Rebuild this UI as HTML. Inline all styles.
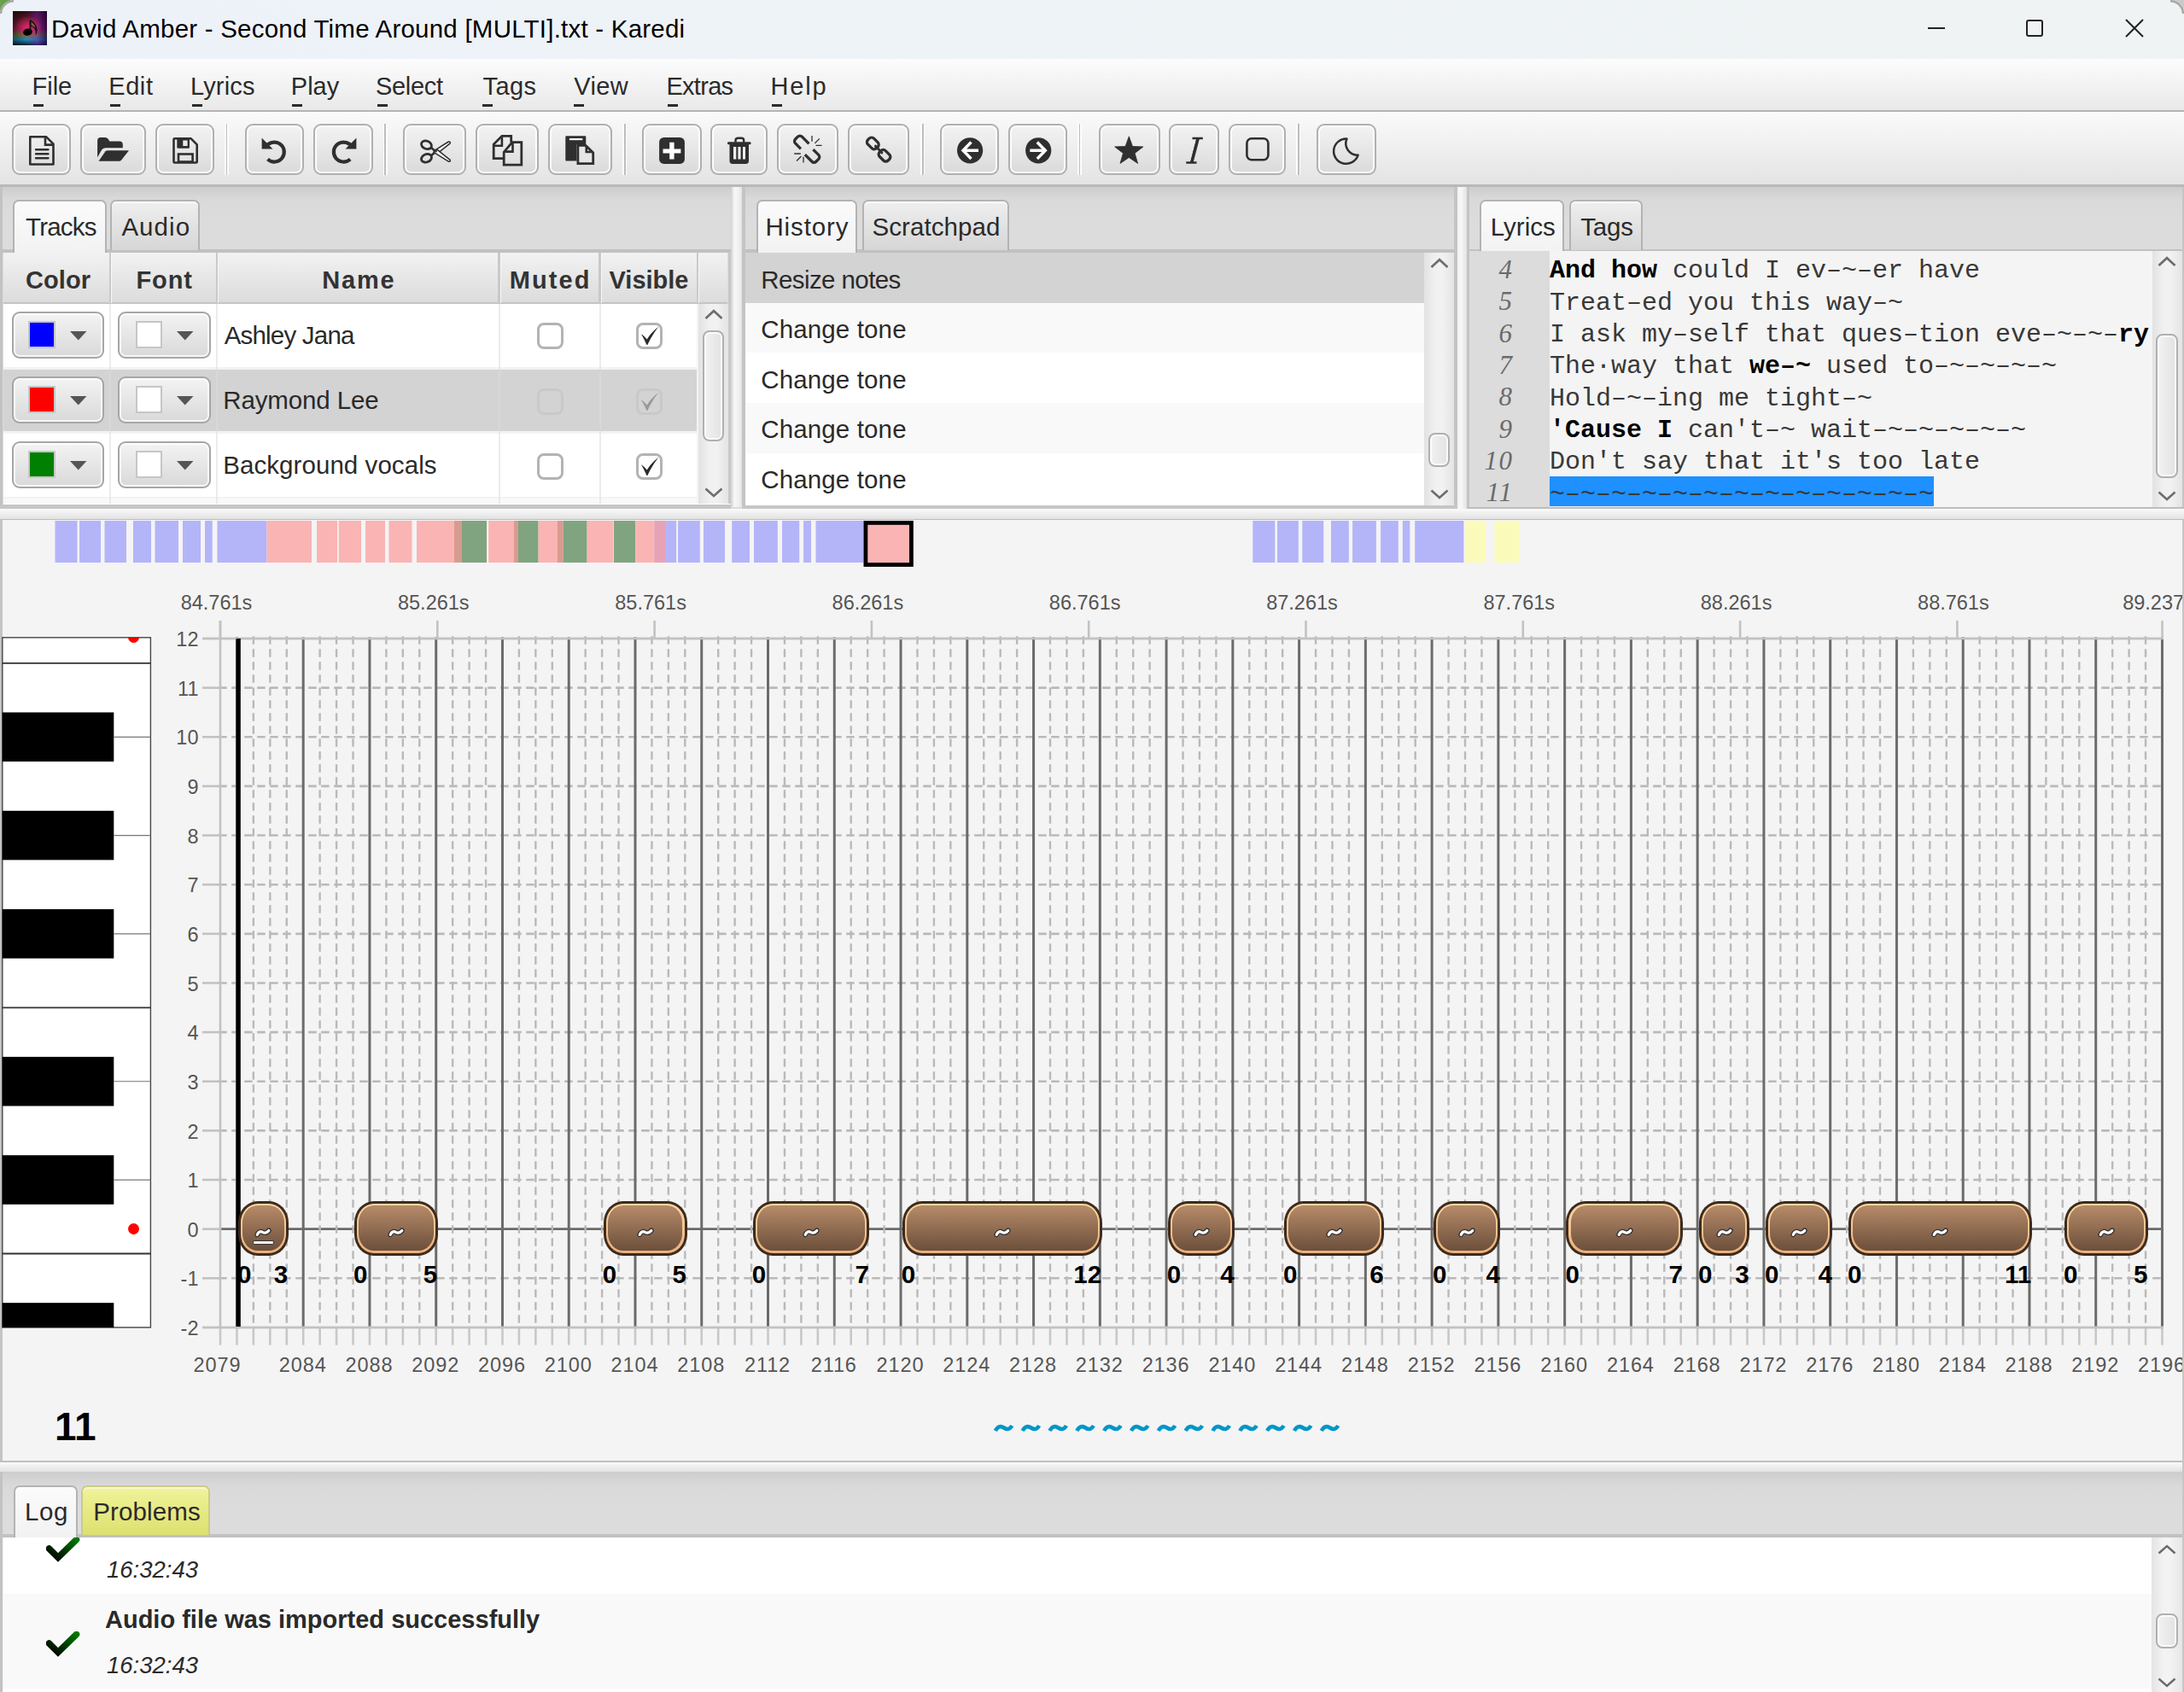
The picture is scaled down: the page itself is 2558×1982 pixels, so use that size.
<!DOCTYPE html>
<html><head><meta charset="utf-8"><style>
html,body{margin:0;padding:0;width:2558px;height:1982px;overflow:hidden;background:#f4f4f4;}
body>div,body>span,body>svg{position:absolute;box-sizing:border-box;}
.t{white-space:pre;}
</style></head><body>
<div style="left:0px;top:0px;width:2558px;height:69px;background:linear-gradient(90deg,#edf2f9 0%,#eef3f7 45%,#eff3f3 100%);"></div><div style="left:15px;top:13px;width:40px;height:40px;background:radial-gradient(ellipse 55% 45% at 45% 48%, rgba(235,40,110,0.85), rgba(235,40,110,0) 75%), linear-gradient(90deg, rgba(0,0,0,0.45) 0%, rgba(0,0,0,0) 40%, rgba(120,30,170,0.45) 72%, rgba(20,0,60,0.75) 100%), linear-gradient(to bottom, #2a1014 0%, #6a1a2c 28%, #982050 52%, #6a7a3a 70%, #1e8ab8 84%, #121c30 100%);"></div><svg style="left:15px;top:13px;width:40px;height:40px" viewBox="0 0 40 40"><ellipse cx="17.5" cy="24.6" rx="5.4" ry="4.1" fill="#000" transform="rotate(-12 17.5 24.6)"/><path d="M19.6 24 V10.5 L21.4 10.5 Q27.5 15 28.5 20.5 Q29.2 25 26.8 28.5 Q27.5 23.5 25.5 20.5 Q23.8 18.5 21.4 17.8 V24.5 Z" fill="#111"/><path d="M21.6 12.5 Q25.5 15.5 26.8 19.5 L24 18 Q22.5 16.8 21.6 16.5 Z" fill="#c08040" opacity="0.7"/></svg><span class="t" style="left:60px;top:19.43px;font-size:29.5px;line-height:29.5px;color:#000;font-weight:normal;font-style:normal;font-family:'Liberation Sans', sans-serif;letter-spacing:0.22px;">David Amber - Second Time Around [MULTI].txt - Karedi</span><div style="left:2258px;top:32px;width:20px;height:2px;background:#222;"></div><div style="left:2373px;top:23px;width:20px;height:20px;border:2px solid #222;border-radius:3px;"></div><svg style="left:2489px;top:22px;width:22px;height:22px" viewBox="0 0 22 22"><path d="M1 1 L21 21 M21 1 L1 21" stroke="#222" stroke-width="2"/></svg><div style="left:0px;top:69px;width:2558px;height:62px;background:linear-gradient(#fcfcfc,#e9e9e9);border-bottom:2px solid #b4b4b4;"></div><span class="t" style="left:37.5px;top:86.95px;font-size:29px;line-height:29px;color:#2b2b2b;font-weight:normal;font-style:normal;font-family:'Liberation Sans', sans-serif;letter-spacing:0px;">File</span><div style="left:39.1px;top:122px;width:12px;height:3px;background:#2b2b2b;"></div><span class="t" style="left:127.20000000000002px;top:86.95px;font-size:29px;line-height:29px;color:#2b2b2b;font-weight:normal;font-style:normal;font-family:'Liberation Sans', sans-serif;letter-spacing:0.6px;">Edit</span><div style="left:128.8px;top:122px;width:12px;height:3px;background:#2b2b2b;"></div><span class="t" style="left:223.0px;top:86.95px;font-size:29px;line-height:29px;color:#2b2b2b;font-weight:normal;font-style:normal;font-family:'Liberation Sans', sans-serif;letter-spacing:0.15px;">Lyrics</span><div style="left:224.6px;top:122px;width:12px;height:3px;background:#2b2b2b;"></div><span class="t" style="left:340.79999999999995px;top:86.95px;font-size:29px;line-height:29px;color:#2b2b2b;font-weight:normal;font-style:normal;font-family:'Liberation Sans', sans-serif;letter-spacing:0px;">Play</span><div style="left:342.4px;top:122px;width:12px;height:3px;background:#2b2b2b;"></div><span class="t" style="left:439.9px;top:86.95px;font-size:29px;line-height:29px;color:#2b2b2b;font-weight:normal;font-style:normal;font-family:'Liberation Sans', sans-serif;letter-spacing:-0.3px;">Select</span><div style="left:441.5px;top:122px;width:12px;height:3px;background:#2b2b2b;"></div><span class="t" style="left:565.6px;top:86.95px;font-size:29px;line-height:29px;color:#2b2b2b;font-weight:normal;font-style:normal;font-family:'Liberation Sans', sans-serif;letter-spacing:0.4px;">Tags</span><div style="left:565.2px;top:122px;width:12px;height:3px;background:#2b2b2b;"></div><span class="t" style="left:672.1999999999999px;top:86.95px;font-size:29px;line-height:29px;color:#2b2b2b;font-weight:normal;font-style:normal;font-family:'Liberation Sans', sans-serif;letter-spacing:0.4px;">View</span><div style="left:671.8px;top:122px;width:12px;height:3px;background:#2b2b2b;"></div><span class="t" style="left:780.4px;top:86.95px;font-size:29px;line-height:29px;color:#2b2b2b;font-weight:normal;font-style:normal;font-family:'Liberation Sans', sans-serif;letter-spacing:-0.7px;">Extras</span><div style="left:782px;top:122px;width:12px;height:3px;background:#2b2b2b;"></div><span class="t" style="left:902.6px;top:86.95px;font-size:29px;line-height:29px;color:#2b2b2b;font-weight:normal;font-style:normal;font-family:'Liberation Sans', sans-serif;letter-spacing:1.8px;">Help</span><div style="left:904.2px;top:122px;width:12px;height:3px;background:#2b2b2b;"></div><div style="left:0px;top:131px;width:2558px;height:88px;background:linear-gradient(#fafafa,#e4e4e4);border-bottom:3px solid #b8b8b8;"></div><div style="left:14px;top:145px;width:69px;height:60px;border:2px solid #b0b0b0;border-radius:9px;background:linear-gradient(#f3f3f3,#dadada);box-shadow:inset 0 0 0 2px rgba(255,255,255,0.85);"></div><div style="left:94px;top:145px;width:77px;height:60px;border:2px solid #b0b0b0;border-radius:9px;background:linear-gradient(#f3f3f3,#dadada);box-shadow:inset 0 0 0 2px rgba(255,255,255,0.85);"></div><div style="left:182px;top:145px;width:69px;height:60px;border:2px solid #b0b0b0;border-radius:9px;background:linear-gradient(#f3f3f3,#dadada);box-shadow:inset 0 0 0 2px rgba(255,255,255,0.85);"></div><div style="left:287px;top:145px;width:69px;height:60px;border:2px solid #b0b0b0;border-radius:9px;background:linear-gradient(#f3f3f3,#dadada);box-shadow:inset 0 0 0 2px rgba(255,255,255,0.85);"></div><div style="left:367px;top:145px;width:70px;height:60px;border:2px solid #b0b0b0;border-radius:9px;background:linear-gradient(#f3f3f3,#dadada);box-shadow:inset 0 0 0 2px rgba(255,255,255,0.85);"></div><div style="left:472px;top:145px;width:74px;height:60px;border:2px solid #b0b0b0;border-radius:9px;background:linear-gradient(#f3f3f3,#dadada);box-shadow:inset 0 0 0 2px rgba(255,255,255,0.85);"></div><div style="left:557px;top:145px;width:74px;height:60px;border:2px solid #b0b0b0;border-radius:9px;background:linear-gradient(#f3f3f3,#dadada);box-shadow:inset 0 0 0 2px rgba(255,255,255,0.85);"></div><div style="left:642px;top:145px;width:75px;height:60px;border:2px solid #b0b0b0;border-radius:9px;background:linear-gradient(#f3f3f3,#dadada);box-shadow:inset 0 0 0 2px rgba(255,255,255,0.85);"></div><div style="left:752px;top:145px;width:70px;height:60px;border:2px solid #b0b0b0;border-radius:9px;background:linear-gradient(#f3f3f3,#dadada);box-shadow:inset 0 0 0 2px rgba(255,255,255,0.85);"></div><div style="left:832px;top:145px;width:67px;height:60px;border:2px solid #b0b0b0;border-radius:9px;background:linear-gradient(#f3f3f3,#dadada);box-shadow:inset 0 0 0 2px rgba(255,255,255,0.85);"></div><div style="left:910px;top:145px;width:72px;height:60px;border:2px solid #b0b0b0;border-radius:9px;background:linear-gradient(#f3f3f3,#dadada);box-shadow:inset 0 0 0 2px rgba(255,255,255,0.85);"></div><div style="left:993px;top:145px;width:72px;height:60px;border:2px solid #b0b0b0;border-radius:9px;background:linear-gradient(#f3f3f3,#dadada);box-shadow:inset 0 0 0 2px rgba(255,255,255,0.85);"></div><div style="left:1101px;top:145px;width:69px;height:60px;border:2px solid #b0b0b0;border-radius:9px;background:linear-gradient(#f3f3f3,#dadada);box-shadow:inset 0 0 0 2px rgba(255,255,255,0.85);"></div><div style="left:1181px;top:145px;width:69px;height:60px;border:2px solid #b0b0b0;border-radius:9px;background:linear-gradient(#f3f3f3,#dadada);box-shadow:inset 0 0 0 2px rgba(255,255,255,0.85);"></div><div style="left:1287px;top:145px;width:72px;height:60px;border:2px solid #b0b0b0;border-radius:9px;background:linear-gradient(#f3f3f3,#dadada);box-shadow:inset 0 0 0 2px rgba(255,255,255,0.85);"></div><div style="left:1369px;top:145px;width:59px;height:60px;border:2px solid #b0b0b0;border-radius:9px;background:linear-gradient(#f3f3f3,#dadada);box-shadow:inset 0 0 0 2px rgba(255,255,255,0.85);"></div><div style="left:1439px;top:145px;width:67px;height:60px;border:2px solid #b0b0b0;border-radius:9px;background:linear-gradient(#f3f3f3,#dadada);box-shadow:inset 0 0 0 2px rgba(255,255,255,0.85);"></div><div style="left:1542px;top:145px;width:70px;height:60px;border:2px solid #b0b0b0;border-radius:9px;background:linear-gradient(#f3f3f3,#dadada);box-shadow:inset 0 0 0 2px rgba(255,255,255,0.85);"></div><div style="left:263px;top:145px;width:5px;height:60px;background:linear-gradient(90deg,#fdfdfd 30%,#bdbdbd 30%,#bdbdbd 70%,#fdfdfd 70%);"></div><div style="left:449px;top:145px;width:5px;height:60px;background:linear-gradient(90deg,#fdfdfd 30%,#bdbdbd 30%,#bdbdbd 70%,#fdfdfd 70%);"></div><div style="left:729px;top:145px;width:5px;height:60px;background:linear-gradient(90deg,#fdfdfd 30%,#bdbdbd 30%,#bdbdbd 70%,#fdfdfd 70%);"></div><div style="left:1078px;top:145px;width:5px;height:60px;background:linear-gradient(90deg,#fdfdfd 30%,#bdbdbd 30%,#bdbdbd 70%,#fdfdfd 70%);"></div><div style="left:1262px;top:145px;width:5px;height:60px;background:linear-gradient(90deg,#fdfdfd 30%,#bdbdbd 30%,#bdbdbd 70%,#fdfdfd 70%);"></div><div style="left:1518px;top:145px;width:5px;height:60px;background:linear-gradient(90deg,#fdfdfd 30%,#bdbdbd 30%,#bdbdbd 70%,#fdfdfd 70%);"></div><svg style="left:0;top:0;width:1700px;height:217px" viewBox="0 0 1700 217"><path d="M35.3 160.3 H54.2 L62.5 168.6 V192.5 H35.3 Z" fill="none" stroke="#2f2f2f" stroke-width="2.6" stroke-linejoin="round"/><path d="M53 160.3 V169.6 H62.5" fill="none" stroke="#2f2f2f" stroke-width="2.6"/><path d="M42 175.2 H56.5 M42 180.2 H56.5 M42 185.2 H56.5" stroke="#2f2f2f" stroke-width="2.4" stroke-linecap="round"/><path d="M114.1 184.5 V165 Q114.1 161 118 161 H123 Q126.5 161 128.2 165.6 H140 Q143.8 165.6 143.8 169.5 V173.2 H124 Q120.5 173.2 118.5 176.5 Z" fill="#2f2f2f"/><path d="M115.5 188.8 L123.5 177.2 Q124.5 176.2 126.5 176.2 H151 L142 187.8 Q141 188.8 139.5 188.8 Z" fill="#2f2f2f"/><path d="M203.5 163.5 Q203.5 162.3 204.7 162.3 H223.7 L230.7 169.3 V189.3 Q230.7 190.5 229.5 190.5 H204.7 Q203.5 190.5 203.5 189.3 Z" fill="none" stroke="#2f2f2f" stroke-width="2.6" stroke-linejoin="round"/><path d="M207.3 163 H222 V172.5 Q222 173.7 220.8 173.7 H208.5 Q207.3 173.7 207.3 172.5 Z M214.3 164.5 V171 H219.6 V164.5 Z" fill="#2f2f2f" fill-rule="evenodd"/><rect x="209" y="180.5" width="16.6" height="9" fill="none" stroke="#2f2f2f" stroke-width="2.6"/><path d="M311 173 A 11.5 11.5 0 1 1 313.5 186.5" fill="none" stroke="#2f2f2f" stroke-width="4.2"/><path d="M306.6 161.5 V174.5 H319.5 Z" fill="#2f2f2f"/><path d="M412.7 173 A 11.5 11.5 0 1 0 410.2 186.5" fill="none" stroke="#2f2f2f" stroke-width="4.2"/><path d="M417.4 161.5 V174.5 H404.5 Z" fill="#2f2f2f"/><ellipse cx="499.5" cy="169.8" rx="6.2" ry="4.6" fill="none" stroke="#2f2f2f" stroke-width="2.8" transform="rotate(22 499.5 169.8)"/><ellipse cx="499.5" cy="185.3" rx="6.2" ry="4.6" fill="none" stroke="#2f2f2f" stroke-width="2.8" transform="rotate(-22 499.5 185.3)"/><path d="M505 173 L510.6 177.6 L505 182.3" fill="none" stroke="#2f2f2f" stroke-width="2.6"/><path d="M508 176.8 L525.3 166 Q527.8 165.6 527.2 167.8 L512.2 179.8 Z" fill="#fafafa" stroke="#2f2f2f" stroke-width="1.5" stroke-linejoin="round"/><path d="M508 178.4 L525.3 189.2 Q527.8 189.6 527.2 187.4 L512.2 175.4 Z" fill="#fafafa" stroke="#2f2f2f" stroke-width="1.5" stroke-linejoin="round"/><circle cx="510.8" cy="177.6" r="1" fill="#2f2f2f"/><path d="M598.7 166.7 V159.3 H587.9 L578.2 169 V185.6 H590.2" fill="none" stroke="#2f2f2f" stroke-width="2.8" stroke-linejoin="miter"/><path d="M587.9 160.5 V170.8 H579" fill="none" stroke="#2f2f2f" stroke-width="2.6"/><path d="M599.9 166.7 H610.8 V193.1 H590.2 V178.2 Z" fill="none" stroke="#2f2f2f" stroke-width="2.8" stroke-linejoin="miter"/><path d="M600.5 167.8 V177.6 H591.2" fill="none" stroke="#2f2f2f" stroke-width="2.6"/><path d="M662.3 160.3 Q662.3 159.3 663.3 159.3 H685.3 Q686.3 159.3 686.3 160.3 V169 H675.5 V188.5 H663.3 Q662.3 188.5 662.3 187.5 Z" fill="#2f2f2f"/><rect x="666.9" y="162" width="15.4" height="2.2" fill="#f4f4f4"/><path d="M676.9 170.4 H686 L694.7 178.8 V191.7 H676.9 Z" fill="#e6e6e6" stroke="#2f2f2f" stroke-width="2.8" stroke-linejoin="miter"/><path d="M686.8 171 V178 H694" fill="none" stroke="#2f2f2f" stroke-width="2.6"/><rect x="772.1" y="161" width="29.8" height="30.9" rx="5.5" fill="#2f2f2f"/><path d="M776.5 174.5 H797.4 V179.5 H776.5 Z M784.2 166.8 H789.6 V186.4 H784.2 Z" fill="#fff"/><path d="M861.5 166.8 V164.5 Q861.5 161.8 864.5 161.8 H868.5 Q871.2 161.8 871.2 164.5 V166.8" fill="none" stroke="#2f2f2f" stroke-width="2.4"/><rect x="852" y="166.2" width="27.5" height="3" rx="1.2" fill="#2f2f2f"/><path d="M854.5 169 H877 V188.5 Q877 191.9 873.5 191.9 H858 Q854.5 191.9 854.5 188.5 Z" fill="#2f2f2f"/><path d="M859 172 H862.3 V186.4 H859 Z M864.4 172 H867.6 V186.4 H864.4 Z M870 172 H873 V186.4 H870 Z" fill="#efefef"/><path d="M6.5 -5.5 H-5 A3.5 3.5 0 0 0 -8.5 -2 V2 A3.5 3.5 0 0 0 -5 5.5 H4" fill="none" stroke="#2f2f2f" stroke-width="3.3" stroke-linecap="butt" transform="translate(939 167.6) rotate(45)"/><path d="M-6.5 5.5 H5 A3.5 3.5 0 0 0 8.5 2 V-2 A3.5 3.5 0 0 0 5 -5.5 H-4" fill="none" stroke="#2f2f2f" stroke-width="3.3" stroke-linecap="butt" transform="translate(951.3 181.8) rotate(45)"/><path d="M951 159 V165.8 M954.3 167.9 L959.8 162.4 M955.6 170.3 H962.5 M930.2 180 H937.8 M933 188.5 L938.5 183 M941 183.7 V190.5" stroke="#2f2f2f" stroke-width="1.3"/><rect x="1017.4" y="160.9" width="9.8" height="14" rx="3.8" fill="none" stroke="#2f2f2f" stroke-width="3.3" transform="rotate(-45 1022.3 167.9)"/><rect x="1031.1" y="175.3" width="9.8" height="14" rx="3.8" fill="none" stroke="#2f2f2f" stroke-width="3.3" transform="rotate(-45 1036 182.3)"/><path d="M1025.5 171.2 L1032.8 178.8" stroke="#2f2f2f" stroke-width="3" stroke-linecap="round"/><circle cx="1136.1" cy="176.3" r="15.1" fill="#2f2f2f"/><path d="M1137.5 166.5 L1128 176.3 L1137.5 186 M1128.8 176.3 H1146" fill="none" stroke="#fff" stroke-width="3.4" stroke-linejoin="miter"/><circle cx="1216.2" cy="176.3" r="15.1" fill="#2f2f2f"/><path d="M1214.8 166.5 L1224.3 176.3 L1214.8 186 M1223.5 176.3 H1206.3" fill="none" stroke="#fff" stroke-width="3.4" stroke-linejoin="miter"/><polygon points="1322.30,159.80 1326.53,171.48 1338.94,171.89 1329.15,179.52 1332.59,191.46 1322.30,184.50 1312.01,191.46 1315.45,179.52 1305.66,171.89 1318.07,171.48" fill="#2f2f2f" stroke="#2f2f2f" stroke-width="0.8" stroke-linejoin="round"/><path d="M1396.5 162 H1408.8 M1389.3 190.5 H1401.5 M1402.6 162 L1395.4 190.5" fill="none" stroke="#2f2f2f" stroke-width="2.6"/><path d="M1401.5 162.2 L1405 162.2 L1397.6 190.3 L1394 190.3 Z" fill="#2f2f2f"/><rect x="1460.4" y="162.3" width="25" height="25" rx="5.5" fill="none" stroke="#2f2f2f" stroke-width="2.6"/><path d="M1577.5 162.6 A 14.6 14.6 0 1 0 1590.6 181.6 A 13.5 13.5 0 0 1 1577.5 162.6 Z" fill="none" stroke="#2f2f2f" stroke-width="2.5" stroke-linejoin="round"/></svg><div style="left:0px;top:219px;width:2558px;height:378px;background:#dcdcdc;"></div><div style="left:0px;top:219px;width:3px;height:378px;background:#c2c2c2;"></div><div style="left:3px;top:219px;width:853px;height:77px;background:linear-gradient(#cdcdcd 0px,#d9d9d9 14px,#dcdcdc 38px);"></div><div style="left:3px;top:292px;width:853px;height:4px;background:#c1c1c1;"></div><div style="left:129px;top:234px;width:105px;height:59px;background:linear-gradient(#efefef,#d6d6d6);border:2px solid #b3b3b3;border-bottom:none;border-radius:7px 7px 0 0;box-shadow:inset 0 2px 0 rgba(255,255,255,0.7);"></div><span class="t" style="left:142.4px;top:251.03px;font-size:29.5px;line-height:29.5px;color:#2a2a2a;font-weight:normal;font-style:normal;font-family:'Liberation Sans', sans-serif;letter-spacing:1.05px;">Audio</span><div style="left:15px;top:234px;width:110px;height:62px;background:linear-gradient(#fbfbfb,#f2f2f2);border:2px solid #b3b3b3;border-bottom:none;border-radius:7px 7px 0 0;box-shadow:inset 0 2px 0 rgba(255,255,255,0.7);"></div><span class="t" style="left:30px;top:251.03px;font-size:29.5px;line-height:29.5px;color:#2a2a2a;font-weight:normal;font-style:normal;font-family:'Liberation Sans', sans-serif;letter-spacing:-0.78px;">Tracks</span><div style="left:4px;top:296px;width:848px;height:60px;background:linear-gradient(#f2f2f2,#dcdcdc);border-bottom:2px solid #c4c4c4;"></div><div style="left:127.5px;top:296px;width:2.5px;height:59px;background:#c9c9c9;box-shadow:1px 0 0 #f7f7f7;"></div><div style="left:252.5px;top:296px;width:2.5px;height:59px;background:#c9c9c9;box-shadow:1px 0 0 #f7f7f7;"></div><div style="left:583px;top:296px;width:2.5px;height:59px;background:#c9c9c9;box-shadow:1px 0 0 #f7f7f7;"></div><div style="left:701px;top:296px;width:2.5px;height:59px;background:#c9c9c9;box-shadow:1px 0 0 #f7f7f7;"></div><div style="left:815.5px;top:296px;width:2.5px;height:59px;background:#c9c9c9;box-shadow:1px 0 0 #f7f7f7;"></div><span class="t" style="left:-431.9px;width:1000px;text-align:center;top:314.45px;font-size:29px;line-height:29px;color:#333;font-weight:bold;font-style:normal;font-family:'Liberation Sans', sans-serif;letter-spacing:0.1px;">Color</span><span class="t" style="left:-307.3px;width:1000px;text-align:center;top:314.45px;font-size:29px;line-height:29px;color:#333;font-weight:bold;font-style:normal;font-family:'Liberation Sans', sans-serif;letter-spacing:0.9px;">Font</span><span class="t" style="left:-79.60000000000002px;width:1000px;text-align:center;top:314.45px;font-size:29px;line-height:29px;color:#333;font-weight:bold;font-style:normal;font-family:'Liberation Sans', sans-serif;letter-spacing:1.8px;">Name</span><span class="t" style="left:144.70000000000005px;width:1000px;text-align:center;top:314.45px;font-size:29px;line-height:29px;color:#333;font-weight:bold;font-style:normal;font-family:'Liberation Sans', sans-serif;letter-spacing:2.1px;">Muted</span><span class="t" style="left:260px;width:1000px;text-align:center;top:314.45px;font-size:29px;line-height:29px;color:#333;font-weight:bold;font-style:normal;font-family:'Liberation Sans', sans-serif;letter-spacing:0px;">Visible</span><div style="left:4px;top:356px;width:812px;height:234px;background:#f3f3f3;"></div><div style="left:4px;top:356px;width:812px;height:74px;background:#ffffff;"></div><div style="left:4px;top:433px;width:812px;height:72px;background:#d3d3d3;"></div><div style="left:4px;top:508px;width:812px;height:74px;background:#ffffff;"></div><div style="left:4px;top:584px;width:812px;height:6px;background:#f9f9f9;"></div><div style="left:128px;top:356px;width:2px;height:234px;background:rgba(220,220,220,0.55);"></div><div style="left:253px;top:356px;width:2px;height:234px;background:rgba(220,220,220,0.55);"></div><div style="left:583.5px;top:356px;width:2px;height:234px;background:rgba(220,220,220,0.55);"></div><div style="left:701.5px;top:356px;width:2px;height:234px;background:rgba(220,220,220,0.55);"></div><div style="left:13.5px;top:365px;width:108px;height:54.5px;border:2px solid #a6a6a6;border-radius:9px;background:linear-gradient(#f3f3f3,#d9d9d9);box-shadow:inset 0 0 0 2px rgba(255,255,255,0.75);"></div><div style="left:33px;top:375.5px;width:32px;height:32px;border:2px solid #c6c6c6;background:#0000ff;"></div><svg style="left:82px;top:387.5px;width:20px;height:11px" viewBox="0 0 20 11"><path d="M0 0 H19.5 L9.75 10.5 Z" fill="#555"/></svg><div style="left:138px;top:365px;width:108.5px;height:54.5px;border:2px solid #a6a6a6;border-radius:9px;background:linear-gradient(#f3f3f3,#d9d9d9);box-shadow:inset 0 0 0 2px rgba(255,255,255,0.75);"></div><div style="left:158.5px;top:375.5px;width:31px;height:32px;border:2px solid #c6c6c6;background:#fff;"></div><svg style="left:207px;top:387.5px;width:20px;height:11px" viewBox="0 0 20 11"><path d="M0 0 H19.5 L9.75 10.5 Z" fill="#555"/></svg><span class="t" style="left:262.7px;top:378.23px;font-size:29.5px;line-height:29.5px;color:#2a2a2a;font-weight:normal;font-style:normal;font-family:'Liberation Sans', sans-serif;letter-spacing:-0.8px;">Ashley Jana</span><div style="left:13.5px;top:441.4px;width:108px;height:54.5px;border:2px solid #a6a6a6;border-radius:9px;background:linear-gradient(#f3f3f3,#d9d9d9);box-shadow:inset 0 0 0 2px rgba(255,255,255,0.75);"></div><div style="left:33px;top:451.9px;width:32px;height:32px;border:2px solid #c6c6c6;background:#ff0000;"></div><svg style="left:82px;top:463.9px;width:20px;height:11px" viewBox="0 0 20 11"><path d="M0 0 H19.5 L9.75 10.5 Z" fill="#555"/></svg><div style="left:138px;top:441.4px;width:108.5px;height:54.5px;border:2px solid #a6a6a6;border-radius:9px;background:linear-gradient(#f3f3f3,#d9d9d9);box-shadow:inset 0 0 0 2px rgba(255,255,255,0.75);"></div><div style="left:158.5px;top:451.9px;width:31px;height:32px;border:2px solid #c6c6c6;background:#fff;"></div><svg style="left:207px;top:463.9px;width:20px;height:11px" viewBox="0 0 20 11"><path d="M0 0 H19.5 L9.75 10.5 Z" fill="#555"/></svg><span class="t" style="left:261.3px;top:454.03px;font-size:29.5px;line-height:29.5px;color:#2a2a2a;font-weight:normal;font-style:normal;font-family:'Liberation Sans', sans-serif;letter-spacing:-0.13px;">Raymond Lee</span><div style="left:13.5px;top:517px;width:108px;height:54.5px;border:2px solid #a6a6a6;border-radius:9px;background:linear-gradient(#f3f3f3,#d9d9d9);box-shadow:inset 0 0 0 2px rgba(255,255,255,0.75);"></div><div style="left:33px;top:527.5px;width:32px;height:32px;border:2px solid #c6c6c6;background:#008000;"></div><svg style="left:82px;top:539.5px;width:20px;height:11px" viewBox="0 0 20 11"><path d="M0 0 H19.5 L9.75 10.5 Z" fill="#555"/></svg><div style="left:138px;top:517px;width:108.5px;height:54.5px;border:2px solid #a6a6a6;border-radius:9px;background:linear-gradient(#f3f3f3,#d9d9d9);box-shadow:inset 0 0 0 2px rgba(255,255,255,0.75);"></div><div style="left:158.5px;top:527.5px;width:31px;height:32px;border:2px solid #c6c6c6;background:#fff;"></div><svg style="left:207px;top:539.5px;width:20px;height:11px" viewBox="0 0 20 11"><path d="M0 0 H19.5 L9.75 10.5 Z" fill="#555"/></svg><span class="t" style="left:261.3px;top:529.63px;font-size:29.5px;line-height:29.5px;color:#2a2a2a;font-weight:normal;font-style:normal;font-family:'Liberation Sans', sans-serif;letter-spacing:0.06px;">Background vocals</span><div style="left:628.6px;top:378px;width:31.3px;height:31.3px;border:3px solid #b3b3b3;border-radius:8px;background:#ffffff;"></div><div style="left:744.6px;top:378px;width:31.3px;height:31.3px;border:3px solid #b3b3b3;border-radius:8px;background:#ffffff;"></div><svg style="left:744.6px;top:378px;width:31px;height:31px" viewBox="0 0 31 31"><path d="M6 13.3 Q8.6 14.6 12.7 19.6 Q17.5 11.5 26.3 4.8 Q18.8 14 13.6 25.6 Q12.9 26.6 12.2 25.6 Q9.3 18.8 6 13.3 Z" fill="#2a2a2a"/></svg><div style="left:628.6px;top:454.5px;width:31.3px;height:31.3px;border:3px solid #c9c9c9;border-radius:8px;background:transparent;"></div><div style="left:744.6px;top:454.5px;width:31.3px;height:31.3px;border:3px solid #c9c9c9;border-radius:8px;background:transparent;"></div><svg style="left:744.6px;top:454.5px;width:31px;height:31px" viewBox="0 0 31 31"><path d="M6 13.3 Q8.6 14.6 12.7 19.6 Q17.5 11.5 26.3 4.8 Q18.8 14 13.6 25.6 Q12.9 26.6 12.2 25.6 Q9.3 18.8 6 13.3 Z" fill="#9a9a9a"/></svg><div style="left:628.6px;top:530.5px;width:31.3px;height:31.3px;border:3px solid #b3b3b3;border-radius:8px;background:#ffffff;"></div><div style="left:744.6px;top:530.5px;width:31.3px;height:31.3px;border:3px solid #b3b3b3;border-radius:8px;background:#ffffff;"></div><svg style="left:744.6px;top:530.5px;width:31px;height:31px" viewBox="0 0 31 31"><path d="M6 13.3 Q8.6 14.6 12.7 19.6 Q17.5 11.5 26.3 4.8 Q18.8 14 13.6 25.6 Q12.9 26.6 12.2 25.6 Q9.3 18.8 6 13.3 Z" fill="#2a2a2a"/></svg><div style="left:816px;top:356px;width:2px;height:234px;background:#f4f4f4;"></div><div style="left:818px;top:356px;width:35px;height:234px;background:linear-gradient(90deg,#e2e2e2,#f0f0f0 35%,#f2f2f2 60%,#e4e4e4);"></div><svg style="left:824.5px;top:361px;width:22px;height:14px" viewBox="0 0 22 14"><path d="M1.5 12 L11 3.2 L20.5 12" fill="none" stroke="#6e6e6e" stroke-width="2.7"/></svg><svg style="left:824.5px;top:570px;width:22px;height:14px" viewBox="0 0 22 14"><path d="M1.5 2.5 L11 11 L20.5 2.5" fill="none" stroke="#6e6e6e" stroke-width="2.7"/></svg><div style="left:822.8px;top:387px;width:25.6px;height:130px;border:2px solid #b0b0b0;border-radius:8px;background:linear-gradient(90deg,#f2f2f2,#e2e2e2);box-shadow:inset 0 0 0 2px rgba(255,255,255,0.8);"></div><div style="left:853px;top:296px;width:3px;height:298px;background:#c8c8c8;"></div><div style="left:4px;top:589.5px;width:852px;height:1.5px;background:#ffffff;"></div><div style="left:0px;top:591px;width:856px;height:5px;background:#c6c6c6;"></div><div style="left:856px;top:219px;width:16px;height:375px;background:linear-gradient(90deg,#cfcfcf,#f7f7f7 25%,#f0f0f0 60%,#d6d6d6);"></div><div style="left:869px;top:219px;width:4px;height:378px;background:#c4c4c4;"></div><div style="left:873px;top:219px;width:830px;height:77px;background:linear-gradient(#cdcdcd 0px,#d9d9d9 14px,#dcdcdc 38px);"></div><div style="left:873px;top:292px;width:830px;height:4px;background:#c1c1c1;"></div><div style="left:1009.6px;top:234px;width:172.39999999999998px;height:59px;background:linear-gradient(#efefef,#d6d6d6);border:2px solid #b3b3b3;border-bottom:none;border-radius:7px 7px 0 0;box-shadow:inset 0 2px 0 rgba(255,255,255,0.7);"></div><span class="t" style="left:1021.4px;top:251.03px;font-size:29.5px;line-height:29.5px;color:#2a2a2a;font-weight:normal;font-style:normal;font-family:'Liberation Sans', sans-serif;letter-spacing:0.09px;">Scratchpad</span><div style="left:885.6px;top:234px;width:118.10000000000002px;height:62px;background:linear-gradient(#fbfbfb,#f2f2f2);border:2px solid #b3b3b3;border-bottom:none;border-radius:7px 7px 0 0;box-shadow:inset 0 2px 0 rgba(255,255,255,0.7);"></div><span class="t" style="left:896.4px;top:251.03px;font-size:29.5px;line-height:29.5px;color:#2a2a2a;font-weight:normal;font-style:normal;font-family:'Liberation Sans', sans-serif;letter-spacing:0.88px;">History</span><div style="left:873px;top:296px;width:795px;height:295.6px;background:#ffffff;"></div><div style="left:873px;top:296px;width:795px;height:58.60000000000002px;background:#d3d3d3;"></div><div style="left:873px;top:354.6px;width:795px;height:58.89999999999998px;background:#f9f9f9;"></div><div style="left:873px;top:413.5px;width:795px;height:58.5px;background:#ffffff;"></div><div style="left:873px;top:472px;width:795px;height:59px;background:#f9f9f9;"></div><div style="left:873px;top:531px;width:795px;height:60.60000000000002px;background:#ffffff;"></div><span class="t" style="left:891.2px;top:312.78px;font-size:29.5px;line-height:29.5px;color:#2a2a2a;font-weight:normal;font-style:normal;font-family:'Liberation Sans', sans-serif;letter-spacing:-0.58px;">Resize notes</span><span class="t" style="left:891.2px;top:371.28px;font-size:29.5px;line-height:29.5px;color:#2a2a2a;font-weight:normal;font-style:normal;font-family:'Liberation Sans', sans-serif;letter-spacing:0.14px;">Change tone</span><span class="t" style="left:891.2px;top:429.78px;font-size:29.5px;line-height:29.5px;color:#2a2a2a;font-weight:normal;font-style:normal;font-family:'Liberation Sans', sans-serif;letter-spacing:0.14px;">Change tone</span><span class="t" style="left:891.2px;top:488.28px;font-size:29.5px;line-height:29.5px;color:#2a2a2a;font-weight:normal;font-style:normal;font-family:'Liberation Sans', sans-serif;letter-spacing:0.14px;">Change tone</span><span class="t" style="left:891.2px;top:546.78px;font-size:29.5px;line-height:29.5px;color:#2a2a2a;font-weight:normal;font-style:normal;font-family:'Liberation Sans', sans-serif;letter-spacing:0.14px;">Change tone</span><div style="left:1668px;top:296px;width:35px;height:295.6px;background:linear-gradient(90deg,#e2e2e2,#f0f0f0 35%,#f2f2f2 60%,#e4e4e4);"></div><svg style="left:1674.5px;top:301px;width:22px;height:14px" viewBox="0 0 22 14"><path d="M1.5 12 L11 3.2 L20.5 12" fill="none" stroke="#6e6e6e" stroke-width="2.7"/></svg><svg style="left:1674.5px;top:571.6px;width:22px;height:14px" viewBox="0 0 22 14"><path d="M1.5 2.5 L11 11 L20.5 2.5" fill="none" stroke="#6e6e6e" stroke-width="2.7"/></svg><div style="left:1672.8px;top:507px;width:25.6px;height:40px;border:2px solid #b0b0b0;border-radius:8px;background:linear-gradient(90deg,#f2f2f2,#e2e2e2);box-shadow:inset 0 0 0 2px rgba(255,255,255,0.8);"></div><div style="left:1703px;top:219px;width:4px;height:378px;background:#c4c4c4;"></div><div style="left:869px;top:591.6px;width:838px;height:4.4px;background:#c6c6c6;"></div><div style="left:1707px;top:219px;width:11px;height:378px;background:linear-gradient(90deg,#f2f2f2,#f7f7f7 40%,#e2e2e2);"></div><div style="left:1718px;top:219px;width:3px;height:378px;background:#c4c4c4;"></div><div style="left:1721px;top:219px;width:837px;height:77px;background:linear-gradient(#cdcdcd 0px,#d9d9d9 14px,#dcdcdc 38px);"></div><div style="left:1721px;top:292px;width:837px;height:4px;background:#c1c1c1;"></div><div style="left:1837.9px;top:234px;width:86.59999999999991px;height:59px;background:linear-gradient(#efefef,#d6d6d6);border:2px solid #b3b3b3;border-bottom:none;border-radius:7px 7px 0 0;box-shadow:inset 0 2px 0 rgba(255,255,255,0.7);"></div><span class="t" style="left:1851.2px;top:251.03px;font-size:29.5px;line-height:29.5px;color:#2a2a2a;font-weight:normal;font-style:normal;font-family:'Liberation Sans', sans-serif;letter-spacing:-0.13px;">Tags</span><div style="left:1733px;top:234px;width:99px;height:62px;background:linear-gradient(#fbfbfb,#f2f2f2);border:2px solid #b3b3b3;border-bottom:none;border-radius:7px 7px 0 0;box-shadow:inset 0 2px 0 rgba(255,255,255,0.7);"></div><span class="t" style="left:1745.8px;top:251.03px;font-size:29.5px;line-height:29.5px;color:#2a2a2a;font-weight:normal;font-style:normal;font-family:'Liberation Sans', sans-serif;letter-spacing:0px;">Lyrics</span><div style="left:1721px;top:294px;width:93.5px;height:299.5px;background:#dcdcdc;"></div><div style="left:1814.5px;top:294px;width:706px;height:299.5px;background:#f4f4f4;"></div><div style="left:1815px;top:557.8px;width:450px;height:35.7px;background:#1e90ff;"></div><div style="left:1721px;top:294px;width:800px;height:299.5px;overflow:hidden;"><span class="t" style="position:absolute;right:748.5px;top:5.84px;font-size:31px;line-height:31px;color:#6a6a6a;font-style:italic;letter-spacing:1.5px;font-family:'Liberation Serif', serif">4</span><span class="t" style="position:absolute;left:94px;top:8.31px;font-size:30px;line-height:30px;color:#383838;font-family:'Liberation Mono', monospace"><b style="color:#000">And how</b> could I ev–~–er have</span><span class="t" style="position:absolute;right:748.5px;top:43.19px;font-size:31px;line-height:31px;color:#6a6a6a;font-style:italic;letter-spacing:1.5px;font-family:'Liberation Serif', serif">5</span><span class="t" style="position:absolute;left:94px;top:45.66px;font-size:30px;line-height:30px;color:#383838;font-family:'Liberation Mono', monospace">Treat–ed you this way–~</span><span class="t" style="position:absolute;right:748.5px;top:80.54px;font-size:31px;line-height:31px;color:#6a6a6a;font-style:italic;letter-spacing:1.5px;font-family:'Liberation Serif', serif">6</span><span class="t" style="position:absolute;left:94px;top:83.00px;font-size:30px;line-height:30px;color:#383838;font-family:'Liberation Mono', monospace">I ask my–self that ques–tion eve–~–~–<b style="color:#000">ry</b></span><span class="t" style="position:absolute;right:748.5px;top:117.89px;font-size:31px;line-height:31px;color:#6a6a6a;font-style:italic;letter-spacing:1.5px;font-family:'Liberation Serif', serif">7</span><span class="t" style="position:absolute;left:94px;top:120.36px;font-size:30px;line-height:30px;color:#383838;font-family:'Liberation Mono', monospace">The·way that <b style="color:#000">we–~</b> used to–~–~–~–~</span><span class="t" style="position:absolute;right:748.5px;top:155.24px;font-size:31px;line-height:31px;color:#6a6a6a;font-style:italic;letter-spacing:1.5px;font-family:'Liberation Serif', serif">8</span><span class="t" style="position:absolute;left:94px;top:157.71px;font-size:30px;line-height:30px;color:#383838;font-family:'Liberation Mono', monospace">Hold–~–ing me tight–~</span><span class="t" style="position:absolute;right:748.5px;top:192.59px;font-size:31px;line-height:31px;color:#6a6a6a;font-style:italic;letter-spacing:1.5px;font-family:'Liberation Serif', serif">9</span><span class="t" style="position:absolute;left:94px;top:195.05px;font-size:30px;line-height:30px;color:#383838;font-family:'Liberation Mono', monospace"><b style="color:#000">'Cause I</b> can't–~ wait–~–~–~–~–~</span><span class="t" style="position:absolute;right:748.5px;top:229.94px;font-size:31px;line-height:31px;color:#6a6a6a;font-style:italic;letter-spacing:1.5px;font-family:'Liberation Serif', serif">10</span><span class="t" style="position:absolute;left:94px;top:232.41px;font-size:30px;line-height:30px;color:#383838;font-family:'Liberation Mono', monospace">Don't say that it's too late</span><span class="t" style="position:absolute;right:748.5px;top:267.29px;font-size:31px;line-height:31px;color:#6a6a6a;font-style:italic;letter-spacing:1.5px;font-family:'Liberation Serif', serif">11</span><span class="t" style="position:absolute;left:94px;top:269.75px;font-size:30px;line-height:30px;color:#383838;font-family:'Liberation Mono', monospace">~–~–~–~–~–~–~–~–~–~–~–~–~</span></div><div style="left:2520.5px;top:294px;width:35.5px;height:299.5px;background:linear-gradient(90deg,#e2e2e2,#f0f0f0 35%,#f2f2f2 60%,#e4e4e4);"></div><svg style="left:2527.25px;top:299px;width:22px;height:14px" viewBox="0 0 22 14"><path d="M1.5 12 L11 3.2 L20.5 12" fill="none" stroke="#6e6e6e" stroke-width="2.7"/></svg><svg style="left:2527.25px;top:573.5px;width:22px;height:14px" viewBox="0 0 22 14"><path d="M1.5 2.5 L11 11 L20.5 2.5" fill="none" stroke="#6e6e6e" stroke-width="2.7"/></svg><div style="left:2525.3px;top:391px;width:25.6px;height:169px;border:2px solid #b0b0b0;border-radius:8px;background:linear-gradient(90deg,#f2f2f2,#e2e2e2);box-shadow:inset 0 0 0 2px rgba(255,255,255,0.8);"></div><div style="left:2556px;top:219px;width:2px;height:378px;background:#c4c4c4;"></div><div style="left:1718px;top:593.5px;width:840px;height:3px;background:#bdbdbd;"></div><div style="left:0px;top:596px;width:2558px;height:13.5px;background:linear-gradient(#fafafa,#e2e2e2);border-bottom:2px solid #bdbdbd;"></div><div style="left:0px;top:609px;width:2558px;height:1104px;background:#f4f4f4;border-left:3px solid #c4c4c4;"></div><svg style="left:0;top:600px;width:2558px;height:1000px" viewBox="0 600 2558 1000"><rect x="64.5" y="610" width="26.00" height="49" fill="#b4b4f9"/><rect x="93" y="610" width="25.00" height="49" fill="#b4b4f9"/><rect x="122.5" y="610" width="25.50" height="49" fill="#b4b4f9"/><rect x="156" y="610" width="21.00" height="49" fill="#b4b4f9"/><rect x="181.5" y="610" width="27.50" height="49" fill="#b4b4f9"/><rect x="214" y="610" width="21.00" height="49" fill="#b4b4f9"/><rect x="240" y="610" width="8.75" height="49" fill="#b4b4f9"/><rect x="254.5" y="610" width="58.00" height="49" fill="#b4b4f9"/><rect x="312.5" y="610" width="52.50" height="49" fill="#fab4b4"/><rect x="371" y="610" width="24.00" height="49" fill="#fab4b4"/><rect x="396.75" y="610" width="26.25" height="49" fill="#fab4b4"/><rect x="428" y="610" width="23.00" height="49" fill="#fab4b4"/><rect x="455.5" y="610" width="27.00" height="49" fill="#fab4b4"/><rect x="488" y="610" width="44.00" height="49" fill="#fab4b4"/><rect x="532" y="610" width="8.30" height="49" fill="#d89b90"/><rect x="540.3" y="610" width="29.80" height="49" fill="#80a480"/><rect x="572.2" y="610" width="29.80" height="49" fill="#fab4b4"/><rect x="602" y="610" width="5.00" height="49" fill="#d89b90"/><rect x="607" y="610" width="23.60" height="49" fill="#80a480"/><rect x="630.6" y="610" width="22.40" height="49" fill="#fab4b4"/><rect x="653" y="610" width="6.80" height="49" fill="#d89b90"/><rect x="659.8" y="610" width="27.80" height="49" fill="#80a480"/><rect x="687.6" y="610" width="30.90" height="49" fill="#fab4b4"/><rect x="719" y="610" width="25.20" height="49" fill="#80a480"/><rect x="744.2" y="610" width="22.10" height="49" fill="#fab4b4"/><rect x="766.3" y="610" width="12.70" height="49" fill="#e6a2b6"/><rect x="779" y="610" width="13.10" height="49" fill="#b4b4f9"/><rect x="794.1" y="610" width="25.70" height="49" fill="#b4b4f9"/><rect x="824" y="610" width="25.00" height="49" fill="#b4b4f9"/><rect x="857.2" y="610" width="20.80" height="49" fill="#b4b4f9"/><rect x="883" y="610" width="27.80" height="49" fill="#b4b4f9"/><rect x="916" y="610" width="20.20" height="49" fill="#b4b4f9"/><rect x="941.1" y="610" width="8.90" height="49" fill="#b4b4f9"/><rect x="955.5" y="610" width="56.00" height="49" fill="#b4b4f9"/><rect x="1467.3" y="610" width="26.00" height="49" fill="#b4b4f9"/><rect x="1496" y="610" width="24.80" height="49" fill="#b4b4f9"/><rect x="1525.3" y="610" width="24.90" height="49" fill="#b4b4f9"/><rect x="1559" y="610" width="20.80" height="49" fill="#b4b4f9"/><rect x="1584.1" y="610" width="27.80" height="49" fill="#b4b4f9"/><rect x="1617.1" y="610" width="20.70" height="49" fill="#b4b4f9"/><rect x="1642.8" y="610" width="8.50" height="49" fill="#b4b4f9"/><rect x="1657.2" y="610" width="57.20" height="49" fill="#b4b4f9"/><rect x="1715.7" y="610" width="24.70" height="49" fill="#fafabb"/><rect x="1750.5" y="610" width="29.30" height="49" fill="#fafabb"/><rect x="1013.9" y="612.4" width="53.5" height="49.1" fill="#fab4b4" stroke="#000" stroke-width="4.8"/><line x1="237" y1="748.00" x2="2533.98" y2="748.00" stroke="#c2c2c2" stroke-width="2.6"/><line x1="237" y1="805.64" x2="258.00" y2="805.64" stroke="#c2c2c2" stroke-width="2.6"/><line x1="256.2" y1="805.64" x2="2532.48" y2="805.64" stroke="#b9b9b9" stroke-width="2.6" stroke-dasharray="9.5 5.5"/><line x1="237" y1="863.28" x2="258.00" y2="863.28" stroke="#c2c2c2" stroke-width="2.6"/><line x1="256.2" y1="863.28" x2="2532.48" y2="863.28" stroke="#b9b9b9" stroke-width="2.6" stroke-dasharray="9.5 5.5"/><line x1="237" y1="920.92" x2="258.00" y2="920.92" stroke="#c2c2c2" stroke-width="2.6"/><line x1="256.2" y1="920.92" x2="2532.48" y2="920.92" stroke="#b9b9b9" stroke-width="2.6" stroke-dasharray="9.5 5.5"/><line x1="237" y1="978.56" x2="258.00" y2="978.56" stroke="#c2c2c2" stroke-width="2.6"/><line x1="256.2" y1="978.56" x2="2532.48" y2="978.56" stroke="#b9b9b9" stroke-width="2.6" stroke-dasharray="9.5 5.5"/><line x1="237" y1="1036.20" x2="258.00" y2="1036.20" stroke="#c2c2c2" stroke-width="2.6"/><line x1="256.2" y1="1036.20" x2="2532.48" y2="1036.20" stroke="#b9b9b9" stroke-width="2.6" stroke-dasharray="9.5 5.5"/><line x1="237" y1="1093.84" x2="258.00" y2="1093.84" stroke="#c2c2c2" stroke-width="2.6"/><line x1="256.2" y1="1093.84" x2="2532.48" y2="1093.84" stroke="#b9b9b9" stroke-width="2.6" stroke-dasharray="9.5 5.5"/><line x1="237" y1="1151.48" x2="258.00" y2="1151.48" stroke="#c2c2c2" stroke-width="2.6"/><line x1="256.2" y1="1151.48" x2="2532.48" y2="1151.48" stroke="#b9b9b9" stroke-width="2.6" stroke-dasharray="9.5 5.5"/><line x1="237" y1="1209.12" x2="258.00" y2="1209.12" stroke="#c2c2c2" stroke-width="2.6"/><line x1="256.2" y1="1209.12" x2="2532.48" y2="1209.12" stroke="#b9b9b9" stroke-width="2.6" stroke-dasharray="9.5 5.5"/><line x1="237" y1="1266.76" x2="258.00" y2="1266.76" stroke="#c2c2c2" stroke-width="2.6"/><line x1="256.2" y1="1266.76" x2="2532.48" y2="1266.76" stroke="#b9b9b9" stroke-width="2.6" stroke-dasharray="9.5 5.5"/><line x1="237" y1="1324.40" x2="258.00" y2="1324.40" stroke="#c2c2c2" stroke-width="2.6"/><line x1="256.2" y1="1324.40" x2="2532.48" y2="1324.40" stroke="#b9b9b9" stroke-width="2.6" stroke-dasharray="9.5 5.5"/><line x1="237" y1="1382.04" x2="258.00" y2="1382.04" stroke="#c2c2c2" stroke-width="2.6"/><line x1="256.2" y1="1382.04" x2="2532.48" y2="1382.04" stroke="#b9b9b9" stroke-width="2.6" stroke-dasharray="9.5 5.5"/><line x1="237" y1="1439.68" x2="258.00" y2="1439.68" stroke="#c2c2c2" stroke-width="2.6"/><line x1="258.0" y1="1439.68" x2="2532.48" y2="1439.68" stroke="#6b6b6b" stroke-width="2.8"/><line x1="237" y1="1497.32" x2="258.00" y2="1497.32" stroke="#c2c2c2" stroke-width="2.6"/><line x1="256.2" y1="1497.32" x2="2532.48" y2="1497.32" stroke="#b9b9b9" stroke-width="2.6" stroke-dasharray="9.5 5.5"/><line x1="237" y1="1554.96" x2="2533.98" y2="1554.96" stroke="#c2c2c2" stroke-width="2.6"/><line x1="258.00" y1="1554.96" x2="258.00" y2="1575.6" stroke="#c8c8c8" stroke-width="2.6"/><line x1="258.00" y1="727" x2="258.00" y2="1554.96" stroke="#c2c2c2" stroke-width="2.6"/><line x1="277.44" y1="1554.96" x2="277.44" y2="1575.6" stroke="#c8c8c8" stroke-width="2.6"/><line x1="277.44" y1="746.50" x2="277.44" y2="1553.66" stroke="#6b6b6b" stroke-width="3"/><line x1="296.88" y1="1554.96" x2="296.88" y2="1575.6" stroke="#c8c8c8" stroke-width="2.6"/><line x1="296.88" y1="745.3" x2="296.88" y2="1553.66" stroke="#b9b9b9" stroke-width="2.4" stroke-dasharray="9.5 5.5"/><line x1="316.32" y1="1554.96" x2="316.32" y2="1575.6" stroke="#c8c8c8" stroke-width="2.6"/><line x1="316.32" y1="745.3" x2="316.32" y2="1553.66" stroke="#b9b9b9" stroke-width="2.4" stroke-dasharray="9.5 5.5"/><line x1="335.76" y1="1554.96" x2="335.76" y2="1575.6" stroke="#c8c8c8" stroke-width="2.6"/><line x1="335.76" y1="745.3" x2="335.76" y2="1553.66" stroke="#b9b9b9" stroke-width="2.4" stroke-dasharray="9.5 5.5"/><line x1="355.20" y1="1554.96" x2="355.20" y2="1575.6" stroke="#c8c8c8" stroke-width="2.6"/><line x1="355.20" y1="746.50" x2="355.20" y2="1553.66" stroke="#6b6b6b" stroke-width="3"/><line x1="374.64" y1="1554.96" x2="374.64" y2="1575.6" stroke="#c8c8c8" stroke-width="2.6"/><line x1="374.64" y1="745.3" x2="374.64" y2="1553.66" stroke="#b9b9b9" stroke-width="2.4" stroke-dasharray="9.5 5.5"/><line x1="394.08" y1="1554.96" x2="394.08" y2="1575.6" stroke="#c8c8c8" stroke-width="2.6"/><line x1="394.08" y1="745.3" x2="394.08" y2="1553.66" stroke="#b9b9b9" stroke-width="2.4" stroke-dasharray="9.5 5.5"/><line x1="413.52" y1="1554.96" x2="413.52" y2="1575.6" stroke="#c8c8c8" stroke-width="2.6"/><line x1="413.52" y1="745.3" x2="413.52" y2="1553.66" stroke="#b9b9b9" stroke-width="2.4" stroke-dasharray="9.5 5.5"/><line x1="432.96" y1="1554.96" x2="432.96" y2="1575.6" stroke="#c8c8c8" stroke-width="2.6"/><line x1="432.96" y1="746.50" x2="432.96" y2="1553.66" stroke="#6b6b6b" stroke-width="3"/><line x1="452.40" y1="1554.96" x2="452.40" y2="1575.6" stroke="#c8c8c8" stroke-width="2.6"/><line x1="452.40" y1="745.3" x2="452.40" y2="1553.66" stroke="#b9b9b9" stroke-width="2.4" stroke-dasharray="9.5 5.5"/><line x1="471.84" y1="1554.96" x2="471.84" y2="1575.6" stroke="#c8c8c8" stroke-width="2.6"/><line x1="471.84" y1="745.3" x2="471.84" y2="1553.66" stroke="#b9b9b9" stroke-width="2.4" stroke-dasharray="9.5 5.5"/><line x1="491.28" y1="1554.96" x2="491.28" y2="1575.6" stroke="#c8c8c8" stroke-width="2.6"/><line x1="491.28" y1="745.3" x2="491.28" y2="1553.66" stroke="#b9b9b9" stroke-width="2.4" stroke-dasharray="9.5 5.5"/><line x1="510.72" y1="1554.96" x2="510.72" y2="1575.6" stroke="#c8c8c8" stroke-width="2.6"/><line x1="510.72" y1="746.50" x2="510.72" y2="1553.66" stroke="#6b6b6b" stroke-width="3"/><line x1="530.16" y1="1554.96" x2="530.16" y2="1575.6" stroke="#c8c8c8" stroke-width="2.6"/><line x1="530.16" y1="745.3" x2="530.16" y2="1553.66" stroke="#b9b9b9" stroke-width="2.4" stroke-dasharray="9.5 5.5"/><line x1="549.60" y1="1554.96" x2="549.60" y2="1575.6" stroke="#c8c8c8" stroke-width="2.6"/><line x1="549.60" y1="745.3" x2="549.60" y2="1553.66" stroke="#b9b9b9" stroke-width="2.4" stroke-dasharray="9.5 5.5"/><line x1="569.04" y1="1554.96" x2="569.04" y2="1575.6" stroke="#c8c8c8" stroke-width="2.6"/><line x1="569.04" y1="745.3" x2="569.04" y2="1553.66" stroke="#b9b9b9" stroke-width="2.4" stroke-dasharray="9.5 5.5"/><line x1="588.48" y1="1554.96" x2="588.48" y2="1575.6" stroke="#c8c8c8" stroke-width="2.6"/><line x1="588.48" y1="746.50" x2="588.48" y2="1553.66" stroke="#6b6b6b" stroke-width="3"/><line x1="607.92" y1="1554.96" x2="607.92" y2="1575.6" stroke="#c8c8c8" stroke-width="2.6"/><line x1="607.92" y1="745.3" x2="607.92" y2="1553.66" stroke="#b9b9b9" stroke-width="2.4" stroke-dasharray="9.5 5.5"/><line x1="627.36" y1="1554.96" x2="627.36" y2="1575.6" stroke="#c8c8c8" stroke-width="2.6"/><line x1="627.36" y1="745.3" x2="627.36" y2="1553.66" stroke="#b9b9b9" stroke-width="2.4" stroke-dasharray="9.5 5.5"/><line x1="646.80" y1="1554.96" x2="646.80" y2="1575.6" stroke="#c8c8c8" stroke-width="2.6"/><line x1="646.80" y1="745.3" x2="646.80" y2="1553.66" stroke="#b9b9b9" stroke-width="2.4" stroke-dasharray="9.5 5.5"/><line x1="666.24" y1="1554.96" x2="666.24" y2="1575.6" stroke="#c8c8c8" stroke-width="2.6"/><line x1="666.24" y1="746.50" x2="666.24" y2="1553.66" stroke="#6b6b6b" stroke-width="3"/><line x1="685.68" y1="1554.96" x2="685.68" y2="1575.6" stroke="#c8c8c8" stroke-width="2.6"/><line x1="685.68" y1="745.3" x2="685.68" y2="1553.66" stroke="#b9b9b9" stroke-width="2.4" stroke-dasharray="9.5 5.5"/><line x1="705.12" y1="1554.96" x2="705.12" y2="1575.6" stroke="#c8c8c8" stroke-width="2.6"/><line x1="705.12" y1="745.3" x2="705.12" y2="1553.66" stroke="#b9b9b9" stroke-width="2.4" stroke-dasharray="9.5 5.5"/><line x1="724.56" y1="1554.96" x2="724.56" y2="1575.6" stroke="#c8c8c8" stroke-width="2.6"/><line x1="724.56" y1="745.3" x2="724.56" y2="1553.66" stroke="#b9b9b9" stroke-width="2.4" stroke-dasharray="9.5 5.5"/><line x1="744.00" y1="1554.96" x2="744.00" y2="1575.6" stroke="#c8c8c8" stroke-width="2.6"/><line x1="744.00" y1="746.50" x2="744.00" y2="1553.66" stroke="#6b6b6b" stroke-width="3"/><line x1="763.44" y1="1554.96" x2="763.44" y2="1575.6" stroke="#c8c8c8" stroke-width="2.6"/><line x1="763.44" y1="745.3" x2="763.44" y2="1553.66" stroke="#b9b9b9" stroke-width="2.4" stroke-dasharray="9.5 5.5"/><line x1="782.88" y1="1554.96" x2="782.88" y2="1575.6" stroke="#c8c8c8" stroke-width="2.6"/><line x1="782.88" y1="745.3" x2="782.88" y2="1553.66" stroke="#b9b9b9" stroke-width="2.4" stroke-dasharray="9.5 5.5"/><line x1="802.32" y1="1554.96" x2="802.32" y2="1575.6" stroke="#c8c8c8" stroke-width="2.6"/><line x1="802.32" y1="745.3" x2="802.32" y2="1553.66" stroke="#b9b9b9" stroke-width="2.4" stroke-dasharray="9.5 5.5"/><line x1="821.76" y1="1554.96" x2="821.76" y2="1575.6" stroke="#c8c8c8" stroke-width="2.6"/><line x1="821.76" y1="746.50" x2="821.76" y2="1553.66" stroke="#6b6b6b" stroke-width="3"/><line x1="841.20" y1="1554.96" x2="841.20" y2="1575.6" stroke="#c8c8c8" stroke-width="2.6"/><line x1="841.20" y1="745.3" x2="841.20" y2="1553.66" stroke="#b9b9b9" stroke-width="2.4" stroke-dasharray="9.5 5.5"/><line x1="860.64" y1="1554.96" x2="860.64" y2="1575.6" stroke="#c8c8c8" stroke-width="2.6"/><line x1="860.64" y1="745.3" x2="860.64" y2="1553.66" stroke="#b9b9b9" stroke-width="2.4" stroke-dasharray="9.5 5.5"/><line x1="880.08" y1="1554.96" x2="880.08" y2="1575.6" stroke="#c8c8c8" stroke-width="2.6"/><line x1="880.08" y1="745.3" x2="880.08" y2="1553.66" stroke="#b9b9b9" stroke-width="2.4" stroke-dasharray="9.5 5.5"/><line x1="899.52" y1="1554.96" x2="899.52" y2="1575.6" stroke="#c8c8c8" stroke-width="2.6"/><line x1="899.52" y1="746.50" x2="899.52" y2="1553.66" stroke="#6b6b6b" stroke-width="3"/><line x1="918.96" y1="1554.96" x2="918.96" y2="1575.6" stroke="#c8c8c8" stroke-width="2.6"/><line x1="918.96" y1="745.3" x2="918.96" y2="1553.66" stroke="#b9b9b9" stroke-width="2.4" stroke-dasharray="9.5 5.5"/><line x1="938.40" y1="1554.96" x2="938.40" y2="1575.6" stroke="#c8c8c8" stroke-width="2.6"/><line x1="938.40" y1="745.3" x2="938.40" y2="1553.66" stroke="#b9b9b9" stroke-width="2.4" stroke-dasharray="9.5 5.5"/><line x1="957.84" y1="1554.96" x2="957.84" y2="1575.6" stroke="#c8c8c8" stroke-width="2.6"/><line x1="957.84" y1="745.3" x2="957.84" y2="1553.66" stroke="#b9b9b9" stroke-width="2.4" stroke-dasharray="9.5 5.5"/><line x1="977.28" y1="1554.96" x2="977.28" y2="1575.6" stroke="#c8c8c8" stroke-width="2.6"/><line x1="977.28" y1="746.50" x2="977.28" y2="1553.66" stroke="#6b6b6b" stroke-width="3"/><line x1="996.72" y1="1554.96" x2="996.72" y2="1575.6" stroke="#c8c8c8" stroke-width="2.6"/><line x1="996.72" y1="745.3" x2="996.72" y2="1553.66" stroke="#b9b9b9" stroke-width="2.4" stroke-dasharray="9.5 5.5"/><line x1="1016.16" y1="1554.96" x2="1016.16" y2="1575.6" stroke="#c8c8c8" stroke-width="2.6"/><line x1="1016.16" y1="745.3" x2="1016.16" y2="1553.66" stroke="#b9b9b9" stroke-width="2.4" stroke-dasharray="9.5 5.5"/><line x1="1035.60" y1="1554.96" x2="1035.60" y2="1575.6" stroke="#c8c8c8" stroke-width="2.6"/><line x1="1035.60" y1="745.3" x2="1035.60" y2="1553.66" stroke="#b9b9b9" stroke-width="2.4" stroke-dasharray="9.5 5.5"/><line x1="1055.04" y1="1554.96" x2="1055.04" y2="1575.6" stroke="#c8c8c8" stroke-width="2.6"/><line x1="1055.04" y1="746.50" x2="1055.04" y2="1553.66" stroke="#6b6b6b" stroke-width="3"/><line x1="1074.48" y1="1554.96" x2="1074.48" y2="1575.6" stroke="#c8c8c8" stroke-width="2.6"/><line x1="1074.48" y1="745.3" x2="1074.48" y2="1553.66" stroke="#b9b9b9" stroke-width="2.4" stroke-dasharray="9.5 5.5"/><line x1="1093.92" y1="1554.96" x2="1093.92" y2="1575.6" stroke="#c8c8c8" stroke-width="2.6"/><line x1="1093.92" y1="745.3" x2="1093.92" y2="1553.66" stroke="#b9b9b9" stroke-width="2.4" stroke-dasharray="9.5 5.5"/><line x1="1113.36" y1="1554.96" x2="1113.36" y2="1575.6" stroke="#c8c8c8" stroke-width="2.6"/><line x1="1113.36" y1="745.3" x2="1113.36" y2="1553.66" stroke="#b9b9b9" stroke-width="2.4" stroke-dasharray="9.5 5.5"/><line x1="1132.80" y1="1554.96" x2="1132.80" y2="1575.6" stroke="#c8c8c8" stroke-width="2.6"/><line x1="1132.80" y1="746.50" x2="1132.80" y2="1553.66" stroke="#6b6b6b" stroke-width="3"/><line x1="1152.24" y1="1554.96" x2="1152.24" y2="1575.6" stroke="#c8c8c8" stroke-width="2.6"/><line x1="1152.24" y1="745.3" x2="1152.24" y2="1553.66" stroke="#b9b9b9" stroke-width="2.4" stroke-dasharray="9.5 5.5"/><line x1="1171.68" y1="1554.96" x2="1171.68" y2="1575.6" stroke="#c8c8c8" stroke-width="2.6"/><line x1="1171.68" y1="745.3" x2="1171.68" y2="1553.66" stroke="#b9b9b9" stroke-width="2.4" stroke-dasharray="9.5 5.5"/><line x1="1191.12" y1="1554.96" x2="1191.12" y2="1575.6" stroke="#c8c8c8" stroke-width="2.6"/><line x1="1191.12" y1="745.3" x2="1191.12" y2="1553.66" stroke="#b9b9b9" stroke-width="2.4" stroke-dasharray="9.5 5.5"/><line x1="1210.56" y1="1554.96" x2="1210.56" y2="1575.6" stroke="#c8c8c8" stroke-width="2.6"/><line x1="1210.56" y1="746.50" x2="1210.56" y2="1553.66" stroke="#6b6b6b" stroke-width="3"/><line x1="1230.00" y1="1554.96" x2="1230.00" y2="1575.6" stroke="#c8c8c8" stroke-width="2.6"/><line x1="1230.00" y1="745.3" x2="1230.00" y2="1553.66" stroke="#b9b9b9" stroke-width="2.4" stroke-dasharray="9.5 5.5"/><line x1="1249.44" y1="1554.96" x2="1249.44" y2="1575.6" stroke="#c8c8c8" stroke-width="2.6"/><line x1="1249.44" y1="745.3" x2="1249.44" y2="1553.66" stroke="#b9b9b9" stroke-width="2.4" stroke-dasharray="9.5 5.5"/><line x1="1268.88" y1="1554.96" x2="1268.88" y2="1575.6" stroke="#c8c8c8" stroke-width="2.6"/><line x1="1268.88" y1="745.3" x2="1268.88" y2="1553.66" stroke="#b9b9b9" stroke-width="2.4" stroke-dasharray="9.5 5.5"/><line x1="1288.32" y1="1554.96" x2="1288.32" y2="1575.6" stroke="#c8c8c8" stroke-width="2.6"/><line x1="1288.32" y1="746.50" x2="1288.32" y2="1553.66" stroke="#6b6b6b" stroke-width="3"/><line x1="1307.76" y1="1554.96" x2="1307.76" y2="1575.6" stroke="#c8c8c8" stroke-width="2.6"/><line x1="1307.76" y1="745.3" x2="1307.76" y2="1553.66" stroke="#b9b9b9" stroke-width="2.4" stroke-dasharray="9.5 5.5"/><line x1="1327.20" y1="1554.96" x2="1327.20" y2="1575.6" stroke="#c8c8c8" stroke-width="2.6"/><line x1="1327.20" y1="745.3" x2="1327.20" y2="1553.66" stroke="#b9b9b9" stroke-width="2.4" stroke-dasharray="9.5 5.5"/><line x1="1346.64" y1="1554.96" x2="1346.64" y2="1575.6" stroke="#c8c8c8" stroke-width="2.6"/><line x1="1346.64" y1="745.3" x2="1346.64" y2="1553.66" stroke="#b9b9b9" stroke-width="2.4" stroke-dasharray="9.5 5.5"/><line x1="1366.08" y1="1554.96" x2="1366.08" y2="1575.6" stroke="#c8c8c8" stroke-width="2.6"/><line x1="1366.08" y1="746.50" x2="1366.08" y2="1553.66" stroke="#6b6b6b" stroke-width="3"/><line x1="1385.52" y1="1554.96" x2="1385.52" y2="1575.6" stroke="#c8c8c8" stroke-width="2.6"/><line x1="1385.52" y1="745.3" x2="1385.52" y2="1553.66" stroke="#b9b9b9" stroke-width="2.4" stroke-dasharray="9.5 5.5"/><line x1="1404.96" y1="1554.96" x2="1404.96" y2="1575.6" stroke="#c8c8c8" stroke-width="2.6"/><line x1="1404.96" y1="745.3" x2="1404.96" y2="1553.66" stroke="#b9b9b9" stroke-width="2.4" stroke-dasharray="9.5 5.5"/><line x1="1424.40" y1="1554.96" x2="1424.40" y2="1575.6" stroke="#c8c8c8" stroke-width="2.6"/><line x1="1424.40" y1="745.3" x2="1424.40" y2="1553.66" stroke="#b9b9b9" stroke-width="2.4" stroke-dasharray="9.5 5.5"/><line x1="1443.84" y1="1554.96" x2="1443.84" y2="1575.6" stroke="#c8c8c8" stroke-width="2.6"/><line x1="1443.84" y1="746.50" x2="1443.84" y2="1553.66" stroke="#6b6b6b" stroke-width="3"/><line x1="1463.28" y1="1554.96" x2="1463.28" y2="1575.6" stroke="#c8c8c8" stroke-width="2.6"/><line x1="1463.28" y1="745.3" x2="1463.28" y2="1553.66" stroke="#b9b9b9" stroke-width="2.4" stroke-dasharray="9.5 5.5"/><line x1="1482.72" y1="1554.96" x2="1482.72" y2="1575.6" stroke="#c8c8c8" stroke-width="2.6"/><line x1="1482.72" y1="745.3" x2="1482.72" y2="1553.66" stroke="#b9b9b9" stroke-width="2.4" stroke-dasharray="9.5 5.5"/><line x1="1502.16" y1="1554.96" x2="1502.16" y2="1575.6" stroke="#c8c8c8" stroke-width="2.6"/><line x1="1502.16" y1="745.3" x2="1502.16" y2="1553.66" stroke="#b9b9b9" stroke-width="2.4" stroke-dasharray="9.5 5.5"/><line x1="1521.60" y1="1554.96" x2="1521.60" y2="1575.6" stroke="#c8c8c8" stroke-width="2.6"/><line x1="1521.60" y1="746.50" x2="1521.60" y2="1553.66" stroke="#6b6b6b" stroke-width="3"/><line x1="1541.04" y1="1554.96" x2="1541.04" y2="1575.6" stroke="#c8c8c8" stroke-width="2.6"/><line x1="1541.04" y1="745.3" x2="1541.04" y2="1553.66" stroke="#b9b9b9" stroke-width="2.4" stroke-dasharray="9.5 5.5"/><line x1="1560.48" y1="1554.96" x2="1560.48" y2="1575.6" stroke="#c8c8c8" stroke-width="2.6"/><line x1="1560.48" y1="745.3" x2="1560.48" y2="1553.66" stroke="#b9b9b9" stroke-width="2.4" stroke-dasharray="9.5 5.5"/><line x1="1579.92" y1="1554.96" x2="1579.92" y2="1575.6" stroke="#c8c8c8" stroke-width="2.6"/><line x1="1579.92" y1="745.3" x2="1579.92" y2="1553.66" stroke="#b9b9b9" stroke-width="2.4" stroke-dasharray="9.5 5.5"/><line x1="1599.36" y1="1554.96" x2="1599.36" y2="1575.6" stroke="#c8c8c8" stroke-width="2.6"/><line x1="1599.36" y1="746.50" x2="1599.36" y2="1553.66" stroke="#6b6b6b" stroke-width="3"/><line x1="1618.80" y1="1554.96" x2="1618.80" y2="1575.6" stroke="#c8c8c8" stroke-width="2.6"/><line x1="1618.80" y1="745.3" x2="1618.80" y2="1553.66" stroke="#b9b9b9" stroke-width="2.4" stroke-dasharray="9.5 5.5"/><line x1="1638.24" y1="1554.96" x2="1638.24" y2="1575.6" stroke="#c8c8c8" stroke-width="2.6"/><line x1="1638.24" y1="745.3" x2="1638.24" y2="1553.66" stroke="#b9b9b9" stroke-width="2.4" stroke-dasharray="9.5 5.5"/><line x1="1657.68" y1="1554.96" x2="1657.68" y2="1575.6" stroke="#c8c8c8" stroke-width="2.6"/><line x1="1657.68" y1="745.3" x2="1657.68" y2="1553.66" stroke="#b9b9b9" stroke-width="2.4" stroke-dasharray="9.5 5.5"/><line x1="1677.12" y1="1554.96" x2="1677.12" y2="1575.6" stroke="#c8c8c8" stroke-width="2.6"/><line x1="1677.12" y1="746.50" x2="1677.12" y2="1553.66" stroke="#6b6b6b" stroke-width="3"/><line x1="1696.56" y1="1554.96" x2="1696.56" y2="1575.6" stroke="#c8c8c8" stroke-width="2.6"/><line x1="1696.56" y1="745.3" x2="1696.56" y2="1553.66" stroke="#b9b9b9" stroke-width="2.4" stroke-dasharray="9.5 5.5"/><line x1="1716.00" y1="1554.96" x2="1716.00" y2="1575.6" stroke="#c8c8c8" stroke-width="2.6"/><line x1="1716.00" y1="745.3" x2="1716.00" y2="1553.66" stroke="#b9b9b9" stroke-width="2.4" stroke-dasharray="9.5 5.5"/><line x1="1735.44" y1="1554.96" x2="1735.44" y2="1575.6" stroke="#c8c8c8" stroke-width="2.6"/><line x1="1735.44" y1="745.3" x2="1735.44" y2="1553.66" stroke="#b9b9b9" stroke-width="2.4" stroke-dasharray="9.5 5.5"/><line x1="1754.88" y1="1554.96" x2="1754.88" y2="1575.6" stroke="#c8c8c8" stroke-width="2.6"/><line x1="1754.88" y1="746.50" x2="1754.88" y2="1553.66" stroke="#6b6b6b" stroke-width="3"/><line x1="1774.32" y1="1554.96" x2="1774.32" y2="1575.6" stroke="#c8c8c8" stroke-width="2.6"/><line x1="1774.32" y1="745.3" x2="1774.32" y2="1553.66" stroke="#b9b9b9" stroke-width="2.4" stroke-dasharray="9.5 5.5"/><line x1="1793.76" y1="1554.96" x2="1793.76" y2="1575.6" stroke="#c8c8c8" stroke-width="2.6"/><line x1="1793.76" y1="745.3" x2="1793.76" y2="1553.66" stroke="#b9b9b9" stroke-width="2.4" stroke-dasharray="9.5 5.5"/><line x1="1813.20" y1="1554.96" x2="1813.20" y2="1575.6" stroke="#c8c8c8" stroke-width="2.6"/><line x1="1813.20" y1="745.3" x2="1813.20" y2="1553.66" stroke="#b9b9b9" stroke-width="2.4" stroke-dasharray="9.5 5.5"/><line x1="1832.64" y1="1554.96" x2="1832.64" y2="1575.6" stroke="#c8c8c8" stroke-width="2.6"/><line x1="1832.64" y1="746.50" x2="1832.64" y2="1553.66" stroke="#6b6b6b" stroke-width="3"/><line x1="1852.08" y1="1554.96" x2="1852.08" y2="1575.6" stroke="#c8c8c8" stroke-width="2.6"/><line x1="1852.08" y1="745.3" x2="1852.08" y2="1553.66" stroke="#b9b9b9" stroke-width="2.4" stroke-dasharray="9.5 5.5"/><line x1="1871.52" y1="1554.96" x2="1871.52" y2="1575.6" stroke="#c8c8c8" stroke-width="2.6"/><line x1="1871.52" y1="745.3" x2="1871.52" y2="1553.66" stroke="#b9b9b9" stroke-width="2.4" stroke-dasharray="9.5 5.5"/><line x1="1890.96" y1="1554.96" x2="1890.96" y2="1575.6" stroke="#c8c8c8" stroke-width="2.6"/><line x1="1890.96" y1="745.3" x2="1890.96" y2="1553.66" stroke="#b9b9b9" stroke-width="2.4" stroke-dasharray="9.5 5.5"/><line x1="1910.40" y1="1554.96" x2="1910.40" y2="1575.6" stroke="#c8c8c8" stroke-width="2.6"/><line x1="1910.40" y1="746.50" x2="1910.40" y2="1553.66" stroke="#6b6b6b" stroke-width="3"/><line x1="1929.84" y1="1554.96" x2="1929.84" y2="1575.6" stroke="#c8c8c8" stroke-width="2.6"/><line x1="1929.84" y1="745.3" x2="1929.84" y2="1553.66" stroke="#b9b9b9" stroke-width="2.4" stroke-dasharray="9.5 5.5"/><line x1="1949.28" y1="1554.96" x2="1949.28" y2="1575.6" stroke="#c8c8c8" stroke-width="2.6"/><line x1="1949.28" y1="745.3" x2="1949.28" y2="1553.66" stroke="#b9b9b9" stroke-width="2.4" stroke-dasharray="9.5 5.5"/><line x1="1968.72" y1="1554.96" x2="1968.72" y2="1575.6" stroke="#c8c8c8" stroke-width="2.6"/><line x1="1968.72" y1="745.3" x2="1968.72" y2="1553.66" stroke="#b9b9b9" stroke-width="2.4" stroke-dasharray="9.5 5.5"/><line x1="1988.16" y1="1554.96" x2="1988.16" y2="1575.6" stroke="#c8c8c8" stroke-width="2.6"/><line x1="1988.16" y1="746.50" x2="1988.16" y2="1553.66" stroke="#6b6b6b" stroke-width="3"/><line x1="2007.60" y1="1554.96" x2="2007.60" y2="1575.6" stroke="#c8c8c8" stroke-width="2.6"/><line x1="2007.60" y1="745.3" x2="2007.60" y2="1553.66" stroke="#b9b9b9" stroke-width="2.4" stroke-dasharray="9.5 5.5"/><line x1="2027.04" y1="1554.96" x2="2027.04" y2="1575.6" stroke="#c8c8c8" stroke-width="2.6"/><line x1="2027.04" y1="745.3" x2="2027.04" y2="1553.66" stroke="#b9b9b9" stroke-width="2.4" stroke-dasharray="9.5 5.5"/><line x1="2046.48" y1="1554.96" x2="2046.48" y2="1575.6" stroke="#c8c8c8" stroke-width="2.6"/><line x1="2046.48" y1="745.3" x2="2046.48" y2="1553.66" stroke="#b9b9b9" stroke-width="2.4" stroke-dasharray="9.5 5.5"/><line x1="2065.92" y1="1554.96" x2="2065.92" y2="1575.6" stroke="#c8c8c8" stroke-width="2.6"/><line x1="2065.92" y1="746.50" x2="2065.92" y2="1553.66" stroke="#6b6b6b" stroke-width="3"/><line x1="2085.36" y1="1554.96" x2="2085.36" y2="1575.6" stroke="#c8c8c8" stroke-width="2.6"/><line x1="2085.36" y1="745.3" x2="2085.36" y2="1553.66" stroke="#b9b9b9" stroke-width="2.4" stroke-dasharray="9.5 5.5"/><line x1="2104.80" y1="1554.96" x2="2104.80" y2="1575.6" stroke="#c8c8c8" stroke-width="2.6"/><line x1="2104.80" y1="745.3" x2="2104.80" y2="1553.66" stroke="#b9b9b9" stroke-width="2.4" stroke-dasharray="9.5 5.5"/><line x1="2124.24" y1="1554.96" x2="2124.24" y2="1575.6" stroke="#c8c8c8" stroke-width="2.6"/><line x1="2124.24" y1="745.3" x2="2124.24" y2="1553.66" stroke="#b9b9b9" stroke-width="2.4" stroke-dasharray="9.5 5.5"/><line x1="2143.68" y1="1554.96" x2="2143.68" y2="1575.6" stroke="#c8c8c8" stroke-width="2.6"/><line x1="2143.68" y1="746.50" x2="2143.68" y2="1553.66" stroke="#6b6b6b" stroke-width="3"/><line x1="2163.12" y1="1554.96" x2="2163.12" y2="1575.6" stroke="#c8c8c8" stroke-width="2.6"/><line x1="2163.12" y1="745.3" x2="2163.12" y2="1553.66" stroke="#b9b9b9" stroke-width="2.4" stroke-dasharray="9.5 5.5"/><line x1="2182.56" y1="1554.96" x2="2182.56" y2="1575.6" stroke="#c8c8c8" stroke-width="2.6"/><line x1="2182.56" y1="745.3" x2="2182.56" y2="1553.66" stroke="#b9b9b9" stroke-width="2.4" stroke-dasharray="9.5 5.5"/><line x1="2202.00" y1="1554.96" x2="2202.00" y2="1575.6" stroke="#c8c8c8" stroke-width="2.6"/><line x1="2202.00" y1="745.3" x2="2202.00" y2="1553.66" stroke="#b9b9b9" stroke-width="2.4" stroke-dasharray="9.5 5.5"/><line x1="2221.44" y1="1554.96" x2="2221.44" y2="1575.6" stroke="#c8c8c8" stroke-width="2.6"/><line x1="2221.44" y1="746.50" x2="2221.44" y2="1553.66" stroke="#6b6b6b" stroke-width="3"/><line x1="2240.88" y1="1554.96" x2="2240.88" y2="1575.6" stroke="#c8c8c8" stroke-width="2.6"/><line x1="2240.88" y1="745.3" x2="2240.88" y2="1553.66" stroke="#b9b9b9" stroke-width="2.4" stroke-dasharray="9.5 5.5"/><line x1="2260.32" y1="1554.96" x2="2260.32" y2="1575.6" stroke="#c8c8c8" stroke-width="2.6"/><line x1="2260.32" y1="745.3" x2="2260.32" y2="1553.66" stroke="#b9b9b9" stroke-width="2.4" stroke-dasharray="9.5 5.5"/><line x1="2279.76" y1="1554.96" x2="2279.76" y2="1575.6" stroke="#c8c8c8" stroke-width="2.6"/><line x1="2279.76" y1="745.3" x2="2279.76" y2="1553.66" stroke="#b9b9b9" stroke-width="2.4" stroke-dasharray="9.5 5.5"/><line x1="2299.20" y1="1554.96" x2="2299.20" y2="1575.6" stroke="#c8c8c8" stroke-width="2.6"/><line x1="2299.20" y1="746.50" x2="2299.20" y2="1553.66" stroke="#6b6b6b" stroke-width="3"/><line x1="2318.64" y1="1554.96" x2="2318.64" y2="1575.6" stroke="#c8c8c8" stroke-width="2.6"/><line x1="2318.64" y1="745.3" x2="2318.64" y2="1553.66" stroke="#b9b9b9" stroke-width="2.4" stroke-dasharray="9.5 5.5"/><line x1="2338.08" y1="1554.96" x2="2338.08" y2="1575.6" stroke="#c8c8c8" stroke-width="2.6"/><line x1="2338.08" y1="745.3" x2="2338.08" y2="1553.66" stroke="#b9b9b9" stroke-width="2.4" stroke-dasharray="9.5 5.5"/><line x1="2357.52" y1="1554.96" x2="2357.52" y2="1575.6" stroke="#c8c8c8" stroke-width="2.6"/><line x1="2357.52" y1="745.3" x2="2357.52" y2="1553.66" stroke="#b9b9b9" stroke-width="2.4" stroke-dasharray="9.5 5.5"/><line x1="2376.96" y1="1554.96" x2="2376.96" y2="1575.6" stroke="#c8c8c8" stroke-width="2.6"/><line x1="2376.96" y1="746.50" x2="2376.96" y2="1553.66" stroke="#6b6b6b" stroke-width="3"/><line x1="2396.40" y1="1554.96" x2="2396.40" y2="1575.6" stroke="#c8c8c8" stroke-width="2.6"/><line x1="2396.40" y1="745.3" x2="2396.40" y2="1553.66" stroke="#b9b9b9" stroke-width="2.4" stroke-dasharray="9.5 5.5"/><line x1="2415.84" y1="1554.96" x2="2415.84" y2="1575.6" stroke="#c8c8c8" stroke-width="2.6"/><line x1="2415.84" y1="745.3" x2="2415.84" y2="1553.66" stroke="#b9b9b9" stroke-width="2.4" stroke-dasharray="9.5 5.5"/><line x1="2435.28" y1="1554.96" x2="2435.28" y2="1575.6" stroke="#c8c8c8" stroke-width="2.6"/><line x1="2435.28" y1="745.3" x2="2435.28" y2="1553.66" stroke="#b9b9b9" stroke-width="2.4" stroke-dasharray="9.5 5.5"/><line x1="2454.72" y1="1554.96" x2="2454.72" y2="1575.6" stroke="#c8c8c8" stroke-width="2.6"/><line x1="2454.72" y1="746.50" x2="2454.72" y2="1553.66" stroke="#6b6b6b" stroke-width="3"/><line x1="2474.16" y1="1554.96" x2="2474.16" y2="1575.6" stroke="#c8c8c8" stroke-width="2.6"/><line x1="2474.16" y1="745.3" x2="2474.16" y2="1553.66" stroke="#b9b9b9" stroke-width="2.4" stroke-dasharray="9.5 5.5"/><line x1="2493.60" y1="1554.96" x2="2493.60" y2="1575.6" stroke="#c8c8c8" stroke-width="2.6"/><line x1="2493.60" y1="745.3" x2="2493.60" y2="1553.66" stroke="#b9b9b9" stroke-width="2.4" stroke-dasharray="9.5 5.5"/><line x1="2513.04" y1="1554.96" x2="2513.04" y2="1575.6" stroke="#c8c8c8" stroke-width="2.6"/><line x1="2513.04" y1="745.3" x2="2513.04" y2="1553.66" stroke="#b9b9b9" stroke-width="2.4" stroke-dasharray="9.5 5.5"/><line x1="2532.48" y1="1554.96" x2="2532.48" y2="1575.6" stroke="#c8c8c8" stroke-width="2.6"/><line x1="2532.48" y1="746.50" x2="2532.48" y2="1553.66" stroke="#6b6b6b" stroke-width="3"/><line x1="237" y1="748.00" x2="2533.98" y2="748.00" stroke="#c2c2c2" stroke-width="2.6"/><line x1="237" y1="1554.96" x2="2533.98" y2="1554.96" stroke="#c2c2c2" stroke-width="2.6"/><line x1="258" y1="727" x2="258" y2="748" stroke="#c2c2c2" stroke-width="2.6"/><line x1="512.3" y1="727" x2="512.3" y2="748" stroke="#c2c2c2" stroke-width="2.6"/><line x1="766.6" y1="727" x2="766.6" y2="748" stroke="#c2c2c2" stroke-width="2.6"/><line x1="1020.9" y1="727" x2="1020.9" y2="748" stroke="#c2c2c2" stroke-width="2.6"/><line x1="1275.2" y1="727" x2="1275.2" y2="748" stroke="#c2c2c2" stroke-width="2.6"/><line x1="1529.5" y1="727" x2="1529.5" y2="748" stroke="#c2c2c2" stroke-width="2.6"/><line x1="1783.8" y1="727" x2="1783.8" y2="748" stroke="#c2c2c2" stroke-width="2.6"/><line x1="2038.1" y1="727" x2="2038.1" y2="748" stroke="#c2c2c2" stroke-width="2.6"/><line x1="2292.4" y1="727" x2="2292.4" y2="748" stroke="#c2c2c2" stroke-width="2.6"/><line x1="2532.5" y1="727" x2="2532.5" y2="748" stroke="#c2c2c2" stroke-width="2.6"/><rect x="276.6" y="748" width="5.2" height="805.96" fill="#000"/><rect x="2.8" y="746.8" width="173.6" height="808.16" fill="#fff" stroke="#444" stroke-width="1.4"/><line x1="2.8" y1="776.82" x2="176.4" y2="776.82" stroke="#333" stroke-width="1.8"/><line x1="2.8" y1="1180.30" x2="176.4" y2="1180.30" stroke="#333" stroke-width="1.8"/><line x1="2.8" y1="1468.50" x2="176.4" y2="1468.50" stroke="#333" stroke-width="1.8"/><rect x="2.8" y="834.48" width="130.5" height="57.60" fill="#000"/><line x1="133.3" y1="863.28" x2="176.4" y2="863.28" stroke="#777" stroke-width="1.2"/><rect x="2.8" y="949.76" width="130.5" height="57.60" fill="#000"/><line x1="133.3" y1="978.56" x2="176.4" y2="978.56" stroke="#777" stroke-width="1.2"/><rect x="2.8" y="1065.04" width="130.5" height="57.60" fill="#000"/><line x1="133.3" y1="1093.84" x2="176.4" y2="1093.84" stroke="#777" stroke-width="1.2"/><rect x="2.8" y="1237.96" width="130.5" height="57.60" fill="#000"/><line x1="133.3" y1="1266.76" x2="176.4" y2="1266.76" stroke="#777" stroke-width="1.2"/><rect x="2.8" y="1353.24" width="130.5" height="57.60" fill="#000"/><line x1="133.3" y1="1382.04" x2="176.4" y2="1382.04" stroke="#777" stroke-width="1.2"/><rect x="2.8" y="1526.16" width="130.5" height="28.80" fill="#000"/></svg><div style="left:2.8px;top:746.8px;width:173.6px;height:807px;overflow:hidden;"><div style="position:absolute;left:147.5px;top:-7.3px;width:13px;height:13px;border-radius:50%;background:#f00;"></div><div style="position:absolute;left:147.5px;top:686.38px;width:13px;height:13px;border-radius:50%;background:#f00;"></div></div><span class="t" style="right:2325.5px;top:738.11px;font-size:23.5px;line-height:23.5px;color:#555;font-weight:normal;font-style:normal;font-family:'Liberation Sans', sans-serif;letter-spacing:0px;">12</span><span class="t" style="right:2325.5px;top:795.75px;font-size:23.5px;line-height:23.5px;color:#555;font-weight:normal;font-style:normal;font-family:'Liberation Sans', sans-serif;letter-spacing:0px;">11</span><span class="t" style="right:2325.5px;top:853.39px;font-size:23.5px;line-height:23.5px;color:#555;font-weight:normal;font-style:normal;font-family:'Liberation Sans', sans-serif;letter-spacing:0px;">10</span><span class="t" style="right:2325.5px;top:911.03px;font-size:23.5px;line-height:23.5px;color:#555;font-weight:normal;font-style:normal;font-family:'Liberation Sans', sans-serif;letter-spacing:0px;">9</span><span class="t" style="right:2325.5px;top:968.67px;font-size:23.5px;line-height:23.5px;color:#555;font-weight:normal;font-style:normal;font-family:'Liberation Sans', sans-serif;letter-spacing:0px;">8</span><span class="t" style="right:2325.5px;top:1026.31px;font-size:23.5px;line-height:23.5px;color:#555;font-weight:normal;font-style:normal;font-family:'Liberation Sans', sans-serif;letter-spacing:0px;">7</span><span class="t" style="right:2325.5px;top:1083.95px;font-size:23.5px;line-height:23.5px;color:#555;font-weight:normal;font-style:normal;font-family:'Liberation Sans', sans-serif;letter-spacing:0px;">6</span><span class="t" style="right:2325.5px;top:1141.59px;font-size:23.5px;line-height:23.5px;color:#555;font-weight:normal;font-style:normal;font-family:'Liberation Sans', sans-serif;letter-spacing:0px;">5</span><span class="t" style="right:2325.5px;top:1199.23px;font-size:23.5px;line-height:23.5px;color:#555;font-weight:normal;font-style:normal;font-family:'Liberation Sans', sans-serif;letter-spacing:0px;">4</span><span class="t" style="right:2325.5px;top:1256.87px;font-size:23.5px;line-height:23.5px;color:#555;font-weight:normal;font-style:normal;font-family:'Liberation Sans', sans-serif;letter-spacing:0px;">3</span><span class="t" style="right:2325.5px;top:1314.51px;font-size:23.5px;line-height:23.5px;color:#555;font-weight:normal;font-style:normal;font-family:'Liberation Sans', sans-serif;letter-spacing:0px;">2</span><span class="t" style="right:2325.5px;top:1372.15px;font-size:23.5px;line-height:23.5px;color:#555;font-weight:normal;font-style:normal;font-family:'Liberation Sans', sans-serif;letter-spacing:0px;">1</span><span class="t" style="right:2325.5px;top:1429.79px;font-size:23.5px;line-height:23.5px;color:#555;font-weight:normal;font-style:normal;font-family:'Liberation Sans', sans-serif;letter-spacing:0px;">0</span><span class="t" style="right:2325.5px;top:1487.43px;font-size:23.5px;line-height:23.5px;color:#555;font-weight:normal;font-style:normal;font-family:'Liberation Sans', sans-serif;letter-spacing:0px;">-1</span><span class="t" style="right:2325.5px;top:1545.07px;font-size:23.5px;line-height:23.5px;color:#555;font-weight:normal;font-style:normal;font-family:'Liberation Sans', sans-serif;letter-spacing:0px;">-2</span><div style="left:0;top:680px;width:2556px;height:50px;overflow:hidden;"><span class="t" style="position:absolute;left:-246.50px;width:1000px;text-align:center;top:15.11px;font-size:23.5px;line-height:23.5px;color:#555;font-family:'Liberation Sans', sans-serif">84.761s</span><span class="t" style="position:absolute;left:7.80px;width:1000px;text-align:center;top:15.11px;font-size:23.5px;line-height:23.5px;color:#555;font-family:'Liberation Sans', sans-serif">85.261s</span><span class="t" style="position:absolute;left:262.10px;width:1000px;text-align:center;top:15.11px;font-size:23.5px;line-height:23.5px;color:#555;font-family:'Liberation Sans', sans-serif">85.761s</span><span class="t" style="position:absolute;left:516.40px;width:1000px;text-align:center;top:15.11px;font-size:23.5px;line-height:23.5px;color:#555;font-family:'Liberation Sans', sans-serif">86.261s</span><span class="t" style="position:absolute;left:770.70px;width:1000px;text-align:center;top:15.11px;font-size:23.5px;line-height:23.5px;color:#555;font-family:'Liberation Sans', sans-serif">86.761s</span><span class="t" style="position:absolute;left:1025.00px;width:1000px;text-align:center;top:15.11px;font-size:23.5px;line-height:23.5px;color:#555;font-family:'Liberation Sans', sans-serif">87.261s</span><span class="t" style="position:absolute;left:1279.30px;width:1000px;text-align:center;top:15.11px;font-size:23.5px;line-height:23.5px;color:#555;font-family:'Liberation Sans', sans-serif">87.761s</span><span class="t" style="position:absolute;left:1533.60px;width:1000px;text-align:center;top:15.11px;font-size:23.5px;line-height:23.5px;color:#555;font-family:'Liberation Sans', sans-serif">88.261s</span><span class="t" style="position:absolute;left:1787.90px;width:1000px;text-align:center;top:15.11px;font-size:23.5px;line-height:23.5px;color:#555;font-family:'Liberation Sans', sans-serif">88.761s</span><span class="t" style="position:absolute;left:2028.00px;width:1000px;text-align:center;top:15.11px;font-size:23.5px;line-height:23.5px;color:#555;font-family:'Liberation Sans', sans-serif">89.237s</span></div><div style="left:0;top:1580px;width:2556px;height:40px;overflow:hidden;"><span class="t" style="position:absolute;left:-245.50px;width:1000px;text-align:center;top:8.31px;font-size:23.5px;line-height:23.5px;color:#555;letter-spacing:0.9px;font-family:'Liberation Sans', sans-serif">2079</span><span class="t" style="position:absolute;left:-145.30px;width:1000px;text-align:center;top:8.31px;font-size:23.5px;line-height:23.5px;color:#555;letter-spacing:0.9px;font-family:'Liberation Sans', sans-serif">2084</span><span class="t" style="position:absolute;left:-67.54px;width:1000px;text-align:center;top:8.31px;font-size:23.5px;line-height:23.5px;color:#555;letter-spacing:0.9px;font-family:'Liberation Sans', sans-serif">2088</span><span class="t" style="position:absolute;left:10.22px;width:1000px;text-align:center;top:8.31px;font-size:23.5px;line-height:23.5px;color:#555;letter-spacing:0.9px;font-family:'Liberation Sans', sans-serif">2092</span><span class="t" style="position:absolute;left:87.98px;width:1000px;text-align:center;top:8.31px;font-size:23.5px;line-height:23.5px;color:#555;letter-spacing:0.9px;font-family:'Liberation Sans', sans-serif">2096</span><span class="t" style="position:absolute;left:165.74px;width:1000px;text-align:center;top:8.31px;font-size:23.5px;line-height:23.5px;color:#555;letter-spacing:0.9px;font-family:'Liberation Sans', sans-serif">2100</span><span class="t" style="position:absolute;left:243.50px;width:1000px;text-align:center;top:8.31px;font-size:23.5px;line-height:23.5px;color:#555;letter-spacing:0.9px;font-family:'Liberation Sans', sans-serif">2104</span><span class="t" style="position:absolute;left:321.26px;width:1000px;text-align:center;top:8.31px;font-size:23.5px;line-height:23.5px;color:#555;letter-spacing:0.9px;font-family:'Liberation Sans', sans-serif">2108</span><span class="t" style="position:absolute;left:399.02px;width:1000px;text-align:center;top:8.31px;font-size:23.5px;line-height:23.5px;color:#555;letter-spacing:0.9px;font-family:'Liberation Sans', sans-serif">2112</span><span class="t" style="position:absolute;left:476.78px;width:1000px;text-align:center;top:8.31px;font-size:23.5px;line-height:23.5px;color:#555;letter-spacing:0.9px;font-family:'Liberation Sans', sans-serif">2116</span><span class="t" style="position:absolute;left:554.54px;width:1000px;text-align:center;top:8.31px;font-size:23.5px;line-height:23.5px;color:#555;letter-spacing:0.9px;font-family:'Liberation Sans', sans-serif">2120</span><span class="t" style="position:absolute;left:632.30px;width:1000px;text-align:center;top:8.31px;font-size:23.5px;line-height:23.5px;color:#555;letter-spacing:0.9px;font-family:'Liberation Sans', sans-serif">2124</span><span class="t" style="position:absolute;left:710.06px;width:1000px;text-align:center;top:8.31px;font-size:23.5px;line-height:23.5px;color:#555;letter-spacing:0.9px;font-family:'Liberation Sans', sans-serif">2128</span><span class="t" style="position:absolute;left:787.82px;width:1000px;text-align:center;top:8.31px;font-size:23.5px;line-height:23.5px;color:#555;letter-spacing:0.9px;font-family:'Liberation Sans', sans-serif">2132</span><span class="t" style="position:absolute;left:865.58px;width:1000px;text-align:center;top:8.31px;font-size:23.5px;line-height:23.5px;color:#555;letter-spacing:0.9px;font-family:'Liberation Sans', sans-serif">2136</span><span class="t" style="position:absolute;left:943.34px;width:1000px;text-align:center;top:8.31px;font-size:23.5px;line-height:23.5px;color:#555;letter-spacing:0.9px;font-family:'Liberation Sans', sans-serif">2140</span><span class="t" style="position:absolute;left:1021.10px;width:1000px;text-align:center;top:8.31px;font-size:23.5px;line-height:23.5px;color:#555;letter-spacing:0.9px;font-family:'Liberation Sans', sans-serif">2144</span><span class="t" style="position:absolute;left:1098.86px;width:1000px;text-align:center;top:8.31px;font-size:23.5px;line-height:23.5px;color:#555;letter-spacing:0.9px;font-family:'Liberation Sans', sans-serif">2148</span><span class="t" style="position:absolute;left:1176.62px;width:1000px;text-align:center;top:8.31px;font-size:23.5px;line-height:23.5px;color:#555;letter-spacing:0.9px;font-family:'Liberation Sans', sans-serif">2152</span><span class="t" style="position:absolute;left:1254.38px;width:1000px;text-align:center;top:8.31px;font-size:23.5px;line-height:23.5px;color:#555;letter-spacing:0.9px;font-family:'Liberation Sans', sans-serif">2156</span><span class="t" style="position:absolute;left:1332.14px;width:1000px;text-align:center;top:8.31px;font-size:23.5px;line-height:23.5px;color:#555;letter-spacing:0.9px;font-family:'Liberation Sans', sans-serif">2160</span><span class="t" style="position:absolute;left:1409.90px;width:1000px;text-align:center;top:8.31px;font-size:23.5px;line-height:23.5px;color:#555;letter-spacing:0.9px;font-family:'Liberation Sans', sans-serif">2164</span><span class="t" style="position:absolute;left:1487.66px;width:1000px;text-align:center;top:8.31px;font-size:23.5px;line-height:23.5px;color:#555;letter-spacing:0.9px;font-family:'Liberation Sans', sans-serif">2168</span><span class="t" style="position:absolute;left:1565.42px;width:1000px;text-align:center;top:8.31px;font-size:23.5px;line-height:23.5px;color:#555;letter-spacing:0.9px;font-family:'Liberation Sans', sans-serif">2172</span><span class="t" style="position:absolute;left:1643.18px;width:1000px;text-align:center;top:8.31px;font-size:23.5px;line-height:23.5px;color:#555;letter-spacing:0.9px;font-family:'Liberation Sans', sans-serif">2176</span><span class="t" style="position:absolute;left:1720.94px;width:1000px;text-align:center;top:8.31px;font-size:23.5px;line-height:23.5px;color:#555;letter-spacing:0.9px;font-family:'Liberation Sans', sans-serif">2180</span><span class="t" style="position:absolute;left:1798.70px;width:1000px;text-align:center;top:8.31px;font-size:23.5px;line-height:23.5px;color:#555;letter-spacing:0.9px;font-family:'Liberation Sans', sans-serif">2184</span><span class="t" style="position:absolute;left:1876.46px;width:1000px;text-align:center;top:8.31px;font-size:23.5px;line-height:23.5px;color:#555;letter-spacing:0.9px;font-family:'Liberation Sans', sans-serif">2188</span><span class="t" style="position:absolute;left:1954.22px;width:1000px;text-align:center;top:8.31px;font-size:23.5px;line-height:23.5px;color:#555;letter-spacing:0.9px;font-family:'Liberation Sans', sans-serif">2192</span><span class="t" style="position:absolute;left:2031.98px;width:1000px;text-align:center;top:8.31px;font-size:23.5px;line-height:23.5px;color:#555;letter-spacing:0.9px;font-family:'Liberation Sans', sans-serif">2196</span></div><div style="left:278.75px;top:1407.2px;width:59.05px;height:63.4px;border-radius:23px / 25px;background:#3e2b1e;"></div><div style="left:281.75px;top:1410.2px;width:53.05px;height:57.4px;border-radius:20px / 22px;background:linear-gradient(#ffd9a3,#e9b07c);"></div><div style="left:283.95px;top:1412.4px;width:48.65px;height:53px;border-radius:18px / 20px;background:linear-gradient(#b78b69,#6c4f3b);"></div><svg style="left:297.27px;top:1436.5px;width:22px;height:14px" viewBox="0 0 22 14"><path d="M4.2 9.3 Q6.5 4.2 10.5 6.3 Q14.5 8.6 17.8 4.4" fill="none" stroke="#333" stroke-width="5.8" stroke-linecap="round"/><path d="M4.2 9.3 Q6.5 4.2 10.5 6.3 Q14.5 8.6 17.8 4.4" fill="none" stroke="#fff" stroke-width="3.2" stroke-linecap="round"/></svg><div style="left:295.77px;top:1453.2px;width:25px;height:5.2px;border-radius:2px;background:#fff;border:1px solid #333;"></div><span class="t" style="left:277.9451282051282px;top:1477.83px;font-size:29.5px;line-height:29.5px;color:#000;font-weight:bold;font-style:normal;font-family:'Liberation Sans', sans-serif;letter-spacing:0px;">0</span><span class="t" style="right:2220.809230769231px;top:1477.83px;font-size:29.5px;line-height:29.5px;color:#000;font-weight:bold;font-style:normal;font-family:'Liberation Sans', sans-serif;letter-spacing:0px;">3</span><div style="left:414.86px;top:1407.2px;width:97.96px;height:63.4px;border-radius:23px / 25px;background:#3e2b1e;"></div><div style="left:417.86px;top:1410.2px;width:91.96px;height:57.4px;border-radius:20px / 22px;background:linear-gradient(#ffd9a3,#e9b07c);"></div><div style="left:420.06px;top:1412.4px;width:87.56px;height:53px;border-radius:18px / 20px;background:linear-gradient(#b78b69,#6c4f3b);"></div><svg style="left:452.84px;top:1436.5px;width:22px;height:14px" viewBox="0 0 22 14"><path d="M4.2 9.3 Q6.5 4.2 10.5 6.3 Q14.5 8.6 17.8 4.4" fill="none" stroke="#333" stroke-width="5.8" stroke-linecap="round"/><path d="M4.2 9.3 Q6.5 4.2 10.5 6.3 Q14.5 8.6 17.8 4.4" fill="none" stroke="#fff" stroke-width="3.2" stroke-linecap="round"/></svg><span class="t" style="left:414.06102564102565px;top:1477.83px;font-size:29.5px;line-height:29.5px;color:#000;font-weight:bold;font-style:normal;font-family:'Liberation Sans', sans-serif;letter-spacing:0px;">0</span><span class="t" style="right:2045.78px;top:1477.83px;font-size:29.5px;line-height:29.5px;color:#000;font-weight:bold;font-style:normal;font-family:'Liberation Sans', sans-serif;letter-spacing:0px;">5</span><div style="left:706.54px;top:1407.2px;width:98.00px;height:63.4px;border-radius:23px / 25px;background:#3e2b1e;"></div><div style="left:709.54px;top:1410.2px;width:92.00px;height:57.4px;border-radius:20px / 22px;background:linear-gradient(#ffd9a3,#e9b07c);"></div><div style="left:711.74px;top:1412.4px;width:87.60px;height:53px;border-radius:18px / 20px;background:linear-gradient(#b78b69,#6c4f3b);"></div><svg style="left:744.54px;top:1436.5px;width:22px;height:14px" viewBox="0 0 22 14"><path d="M4.2 9.3 Q6.5 4.2 10.5 6.3 Q14.5 8.6 17.8 4.4" fill="none" stroke="#333" stroke-width="5.8" stroke-linecap="round"/><path d="M4.2 9.3 Q6.5 4.2 10.5 6.3 Q14.5 8.6 17.8 4.4" fill="none" stroke="#fff" stroke-width="3.2" stroke-linecap="round"/></svg><span class="t" style="left:705.7379487179487px;top:1477.83px;font-size:29.5px;line-height:29.5px;color:#000;font-weight:bold;font-style:normal;font-family:'Liberation Sans', sans-serif;letter-spacing:0px;">0</span><span class="t" style="right:1754.0646153846153px;top:1477.83px;font-size:29.5px;line-height:29.5px;color:#000;font-weight:bold;font-style:normal;font-family:'Liberation Sans', sans-serif;letter-spacing:0px;">5</span><div style="left:881.54px;top:1407.2px;width:136.92px;height:63.4px;border-radius:23px / 25px;background:#3e2b1e;"></div><div style="left:884.54px;top:1410.2px;width:130.92px;height:57.4px;border-radius:20px / 22px;background:linear-gradient(#ffd9a3,#e9b07c);"></div><div style="left:886.74px;top:1412.4px;width:126.52px;height:53px;border-radius:18px / 20px;background:linear-gradient(#b78b69,#6c4f3b);"></div><svg style="left:939.00px;top:1436.5px;width:22px;height:14px" viewBox="0 0 22 14"><path d="M4.2 9.3 Q6.5 4.2 10.5 6.3 Q14.5 8.6 17.8 4.4" fill="none" stroke="#333" stroke-width="5.8" stroke-linecap="round"/><path d="M4.2 9.3 Q6.5 4.2 10.5 6.3 Q14.5 8.6 17.8 4.4" fill="none" stroke="#fff" stroke-width="3.2" stroke-linecap="round"/></svg><span class="t" style="left:880.7441025641026px;top:1477.83px;font-size:29.5px;line-height:29.5px;color:#000;font-weight:bold;font-style:normal;font-family:'Liberation Sans', sans-serif;letter-spacing:0px;">0</span><span class="t" style="right:1540.1399999999999px;top:1477.83px;font-size:29.5px;line-height:29.5px;color:#000;font-weight:bold;font-style:normal;font-family:'Liberation Sans', sans-serif;letter-spacing:0px;">7</span><div style="left:1056.55px;top:1407.2px;width:234.18px;height:63.4px;border-radius:23px / 25px;background:#3e2b1e;"></div><div style="left:1059.55px;top:1410.2px;width:228.18px;height:57.4px;border-radius:20px / 22px;background:linear-gradient(#ffd9a3,#e9b07c);"></div><div style="left:1061.75px;top:1412.4px;width:223.78px;height:53px;border-radius:18px / 20px;background:linear-gradient(#b78b69,#6c4f3b);"></div><svg style="left:1162.64px;top:1436.5px;width:22px;height:14px" viewBox="0 0 22 14"><path d="M4.2 9.3 Q6.5 4.2 10.5 6.3 Q14.5 8.6 17.8 4.4" fill="none" stroke="#333" stroke-width="5.8" stroke-linecap="round"/><path d="M4.2 9.3 Q6.5 4.2 10.5 6.3 Q14.5 8.6 17.8 4.4" fill="none" stroke="#fff" stroke-width="3.2" stroke-linecap="round"/></svg><span class="t" style="left:1055.7502564102563px;top:1477.83px;font-size:29.5px;line-height:29.5px;color:#000;font-weight:bold;font-style:normal;font-family:'Liberation Sans', sans-serif;letter-spacing:0px;">0</span><span class="t" style="right:1267.8723076923075px;top:1477.83px;font-size:29.5px;line-height:29.5px;color:#000;font-weight:bold;font-style:normal;font-family:'Liberation Sans', sans-serif;letter-spacing:0px;">12</span><div style="left:1367.67px;top:1407.2px;width:78.64px;height:63.4px;border-radius:23px / 25px;background:#3e2b1e;"></div><div style="left:1370.67px;top:1410.2px;width:72.64px;height:57.4px;border-radius:20px / 22px;background:linear-gradient(#ffd9a3,#e9b07c);"></div><div style="left:1372.87px;top:1412.4px;width:68.24px;height:53px;border-radius:18px / 20px;background:linear-gradient(#b78b69,#6c4f3b);"></div><svg style="left:1395.99px;top:1436.5px;width:22px;height:14px" viewBox="0 0 22 14"><path d="M4.2 9.3 Q6.5 4.2 10.5 6.3 Q14.5 8.6 17.8 4.4" fill="none" stroke="#333" stroke-width="5.8" stroke-linecap="round"/><path d="M4.2 9.3 Q6.5 4.2 10.5 6.3 Q14.5 8.6 17.8 4.4" fill="none" stroke="#fff" stroke-width="3.2" stroke-linecap="round"/></svg><span class="t" style="left:1366.872307692308px;top:1477.83px;font-size:29.5px;line-height:29.5px;color:#000;font-weight:bold;font-style:normal;font-family:'Liberation Sans', sans-serif;letter-spacing:0px;">0</span><span class="t" style="right:1112.290769230769px;top:1477.83px;font-size:29.5px;line-height:29.5px;color:#000;font-weight:bold;font-style:normal;font-family:'Liberation Sans', sans-serif;letter-spacing:0px;">4</span><div style="left:1503.79px;top:1407.2px;width:117.55px;height:63.4px;border-radius:23px / 25px;background:#3e2b1e;"></div><div style="left:1506.79px;top:1410.2px;width:111.55px;height:57.4px;border-radius:20px / 22px;background:linear-gradient(#ffd9a3,#e9b07c);"></div><div style="left:1508.99px;top:1412.4px;width:107.15px;height:53px;border-radius:18px / 20px;background:linear-gradient(#b78b69,#6c4f3b);"></div><svg style="left:1551.56px;top:1436.5px;width:22px;height:14px" viewBox="0 0 22 14"><path d="M4.2 9.3 Q6.5 4.2 10.5 6.3 Q14.5 8.6 17.8 4.4" fill="none" stroke="#333" stroke-width="5.8" stroke-linecap="round"/><path d="M4.2 9.3 Q6.5 4.2 10.5 6.3 Q14.5 8.6 17.8 4.4" fill="none" stroke="#fff" stroke-width="3.2" stroke-linecap="round"/></svg><span class="t" style="left:1502.9882051282052px;top:1477.83px;font-size:29.5px;line-height:29.5px;color:#000;font-weight:bold;font-style:normal;font-family:'Liberation Sans', sans-serif;letter-spacing:0px;">0</span><span class="t" style="right:937.2615384615383px;top:1477.83px;font-size:29.5px;line-height:29.5px;color:#000;font-weight:bold;font-style:normal;font-family:'Liberation Sans', sans-serif;letter-spacing:0px;">6</span><div style="left:1678.79px;top:1407.2px;width:78.68px;height:63.4px;border-radius:23px / 25px;background:#3e2b1e;"></div><div style="left:1681.79px;top:1410.2px;width:72.68px;height:57.4px;border-radius:20px / 22px;background:linear-gradient(#ffd9a3,#e9b07c);"></div><div style="left:1683.99px;top:1412.4px;width:68.28px;height:53px;border-radius:18px / 20px;background:linear-gradient(#b78b69,#6c4f3b);"></div><svg style="left:1707.13px;top:1436.5px;width:22px;height:14px" viewBox="0 0 22 14"><path d="M4.2 9.3 Q6.5 4.2 10.5 6.3 Q14.5 8.6 17.8 4.4" fill="none" stroke="#333" stroke-width="5.8" stroke-linecap="round"/><path d="M4.2 9.3 Q6.5 4.2 10.5 6.3 Q14.5 8.6 17.8 4.4" fill="none" stroke="#fff" stroke-width="3.2" stroke-linecap="round"/></svg><span class="t" style="left:1677.994358974359px;top:1477.83px;font-size:29.5px;line-height:29.5px;color:#000;font-weight:bold;font-style:normal;font-family:'Liberation Sans', sans-serif;letter-spacing:0px;">0</span><span class="t" style="right:801.1276923076921px;top:1477.83px;font-size:29.5px;line-height:29.5px;color:#000;font-weight:bold;font-style:normal;font-family:'Liberation Sans', sans-serif;letter-spacing:0px;">4</span><div style="left:1834.36px;top:1407.2px;width:137.04px;height:63.4px;border-radius:23px / 25px;background:#3e2b1e;"></div><div style="left:1837.36px;top:1410.2px;width:131.04px;height:57.4px;border-radius:20px / 22px;background:linear-gradient(#ffd9a3,#e9b07c);"></div><div style="left:1839.56px;top:1412.4px;width:126.64px;height:53px;border-radius:18px / 20px;background:linear-gradient(#b78b69,#6c4f3b);"></div><svg style="left:1891.88px;top:1436.5px;width:22px;height:14px" viewBox="0 0 22 14"><path d="M4.2 9.3 Q6.5 4.2 10.5 6.3 Q14.5 8.6 17.8 4.4" fill="none" stroke="#333" stroke-width="5.8" stroke-linecap="round"/><path d="M4.2 9.3 Q6.5 4.2 10.5 6.3 Q14.5 8.6 17.8 4.4" fill="none" stroke="#fff" stroke-width="3.2" stroke-linecap="round"/></svg><span class="t" style="left:1833.5553846153848px;top:1477.83px;font-size:29.5px;line-height:29.5px;color:#000;font-weight:bold;font-style:normal;font-family:'Liberation Sans', sans-serif;letter-spacing:0px;">0</span><span class="t" style="right:587.2030769230769px;top:1477.83px;font-size:29.5px;line-height:29.5px;color:#000;font-weight:bold;font-style:normal;font-family:'Liberation Sans', sans-serif;letter-spacing:0px;">7</span><div style="left:1989.92px;top:1407.2px;width:59.27px;height:63.4px;border-radius:23px / 25px;background:#3e2b1e;"></div><div style="left:1992.92px;top:1410.2px;width:53.27px;height:57.4px;border-radius:20px / 22px;background:linear-gradient(#ffd9a3,#e9b07c);"></div><div style="left:1995.12px;top:1412.4px;width:48.87px;height:53px;border-radius:18px / 20px;background:linear-gradient(#b78b69,#6c4f3b);"></div><svg style="left:2008.55px;top:1436.5px;width:22px;height:14px" viewBox="0 0 22 14"><path d="M4.2 9.3 Q6.5 4.2 10.5 6.3 Q14.5 8.6 17.8 4.4" fill="none" stroke="#333" stroke-width="5.8" stroke-linecap="round"/><path d="M4.2 9.3 Q6.5 4.2 10.5 6.3 Q14.5 8.6 17.8 4.4" fill="none" stroke="#fff" stroke-width="3.2" stroke-linecap="round"/></svg><span class="t" style="left:1989.1164102564103px;top:1477.83px;font-size:29.5px;line-height:29.5px;color:#000;font-weight:bold;font-style:normal;font-family:'Liberation Sans', sans-serif;letter-spacing:0px;">0</span><span class="t" style="right:509.4123076923074px;top:1477.83px;font-size:29.5px;line-height:29.5px;color:#000;font-weight:bold;font-style:normal;font-family:'Liberation Sans', sans-serif;letter-spacing:0px;">3</span><div style="left:2067.70px;top:1407.2px;width:78.73px;height:63.4px;border-radius:23px / 25px;background:#3e2b1e;"></div><div style="left:2070.70px;top:1410.2px;width:72.73px;height:57.4px;border-radius:20px / 22px;background:linear-gradient(#ffd9a3,#e9b07c);"></div><div style="left:2072.90px;top:1412.4px;width:68.33px;height:53px;border-radius:18px / 20px;background:linear-gradient(#b78b69,#6c4f3b);"></div><svg style="left:2096.06px;top:1436.5px;width:22px;height:14px" viewBox="0 0 22 14"><path d="M4.2 9.3 Q6.5 4.2 10.5 6.3 Q14.5 8.6 17.8 4.4" fill="none" stroke="#333" stroke-width="5.8" stroke-linecap="round"/><path d="M4.2 9.3 Q6.5 4.2 10.5 6.3 Q14.5 8.6 17.8 4.4" fill="none" stroke="#fff" stroke-width="3.2" stroke-linecap="round"/></svg><span class="t" style="left:2066.896923076923px;top:1477.83px;font-size:29.5px;line-height:29.5px;color:#000;font-weight:bold;font-style:normal;font-family:'Liberation Sans', sans-serif;letter-spacing:0px;">0</span><span class="t" style="right:412.1738461538457px;top:1477.83px;font-size:29.5px;line-height:29.5px;color:#000;font-weight:bold;font-style:normal;font-family:'Liberation Sans', sans-serif;letter-spacing:0px;">4</span><div style="left:2164.92px;top:1407.2px;width:214.88px;height:63.4px;border-radius:23px / 25px;background:#3e2b1e;"></div><div style="left:2167.92px;top:1410.2px;width:208.88px;height:57.4px;border-radius:20px / 22px;background:linear-gradient(#ffd9a3,#e9b07c);"></div><div style="left:2170.12px;top:1412.4px;width:204.48px;height:53px;border-radius:18px / 20px;background:linear-gradient(#b78b69,#6c4f3b);"></div><svg style="left:2261.36px;top:1436.5px;width:22px;height:14px" viewBox="0 0 22 14"><path d="M4.2 9.3 Q6.5 4.2 10.5 6.3 Q14.5 8.6 17.8 4.4" fill="none" stroke="#333" stroke-width="5.8" stroke-linecap="round"/><path d="M4.2 9.3 Q6.5 4.2 10.5 6.3 Q14.5 8.6 17.8 4.4" fill="none" stroke="#fff" stroke-width="3.2" stroke-linecap="round"/></svg><span class="t" style="left:2164.122564102564px;top:1477.83px;font-size:29.5px;line-height:29.5px;color:#000;font-weight:bold;font-style:normal;font-family:'Liberation Sans', sans-serif;letter-spacing:0px;">0</span><span class="t" style="right:178.80153846153826px;top:1477.83px;font-size:29.5px;line-height:29.5px;color:#000;font-weight:bold;font-style:normal;font-family:'Liberation Sans', sans-serif;letter-spacing:0px;">11</span><div style="left:2417.71px;top:1407.2px;width:98.22px;height:63.4px;border-radius:23px / 25px;background:#3e2b1e;"></div><div style="left:2420.71px;top:1410.2px;width:92.22px;height:57.4px;border-radius:20px / 22px;background:linear-gradient(#ffd9a3,#e9b07c);"></div><div style="left:2422.91px;top:1412.4px;width:87.82px;height:53px;border-radius:18px / 20px;background:linear-gradient(#b78b69,#6c4f3b);"></div><svg style="left:2455.82px;top:1436.5px;width:22px;height:14px" viewBox="0 0 22 14"><path d="M4.2 9.3 Q6.5 4.2 10.5 6.3 Q14.5 8.6 17.8 4.4" fill="none" stroke="#333" stroke-width="5.8" stroke-linecap="round"/><path d="M4.2 9.3 Q6.5 4.2 10.5 6.3 Q14.5 8.6 17.8 4.4" fill="none" stroke="#fff" stroke-width="3.2" stroke-linecap="round"/></svg><span class="t" style="left:2416.909230769231px;top:1477.83px;font-size:29.5px;line-height:29.5px;color:#000;font-weight:bold;font-style:normal;font-family:'Liberation Sans', sans-serif;letter-spacing:0px;">0</span><span class="t" style="right:42.66769230769205px;top:1477.83px;font-size:29.5px;line-height:29.5px;color:#000;font-weight:bold;font-style:normal;font-family:'Liberation Sans', sans-serif;letter-spacing:0px;">5</span><span class="t" style="left:64px;top:1648.06px;font-size:46px;line-height:46px;color:#000;font-weight:bold;font-style:normal;font-family:'Liberation Sans', sans-serif;letter-spacing:0px;">11</span><svg style="left:0;top:1600px;width:2558px;height:100px" viewBox="0 1600 2558 100"><path d="M1165.80 1676 Q1169.80 1668.5 1175.80 1672.5 Q1181.80 1676.5 1185.30 1670" fill="none" stroke="#0096c8" stroke-width="4.6" stroke-linecap="butt"/><path d="M1197.63 1676 Q1201.63 1668.5 1207.63 1672.5 Q1213.63 1676.5 1217.13 1670" fill="none" stroke="#0096c8" stroke-width="4.6" stroke-linecap="butt"/><path d="M1229.46 1676 Q1233.46 1668.5 1239.46 1672.5 Q1245.46 1676.5 1248.96 1670" fill="none" stroke="#0096c8" stroke-width="4.6" stroke-linecap="butt"/><path d="M1261.29 1676 Q1265.29 1668.5 1271.29 1672.5 Q1277.29 1676.5 1280.79 1670" fill="none" stroke="#0096c8" stroke-width="4.6" stroke-linecap="butt"/><path d="M1293.12 1676 Q1297.12 1668.5 1303.12 1672.5 Q1309.12 1676.5 1312.62 1670" fill="none" stroke="#0096c8" stroke-width="4.6" stroke-linecap="butt"/><path d="M1324.95 1676 Q1328.95 1668.5 1334.95 1672.5 Q1340.95 1676.5 1344.45 1670" fill="none" stroke="#0096c8" stroke-width="4.6" stroke-linecap="butt"/><path d="M1356.78 1676 Q1360.78 1668.5 1366.78 1672.5 Q1372.78 1676.5 1376.28 1670" fill="none" stroke="#0096c8" stroke-width="4.6" stroke-linecap="butt"/><path d="M1388.61 1676 Q1392.61 1668.5 1398.61 1672.5 Q1404.61 1676.5 1408.11 1670" fill="none" stroke="#0096c8" stroke-width="4.6" stroke-linecap="butt"/><path d="M1420.44 1676 Q1424.44 1668.5 1430.44 1672.5 Q1436.44 1676.5 1439.94 1670" fill="none" stroke="#0096c8" stroke-width="4.6" stroke-linecap="butt"/><path d="M1452.27 1676 Q1456.27 1668.5 1462.27 1672.5 Q1468.27 1676.5 1471.77 1670" fill="none" stroke="#0096c8" stroke-width="4.6" stroke-linecap="butt"/><path d="M1484.10 1676 Q1488.10 1668.5 1494.10 1672.5 Q1500.10 1676.5 1503.60 1670" fill="none" stroke="#0096c8" stroke-width="4.6" stroke-linecap="butt"/><path d="M1515.93 1676 Q1519.93 1668.5 1525.93 1672.5 Q1531.93 1676.5 1535.43 1670" fill="none" stroke="#0096c8" stroke-width="4.6" stroke-linecap="butt"/><path d="M1547.76 1676 Q1551.76 1668.5 1557.76 1672.5 Q1563.76 1676.5 1567.26 1670" fill="none" stroke="#0096c8" stroke-width="4.6" stroke-linecap="butt"/></svg><div style="left:0px;top:1711px;width:2558px;height:13px;background:linear-gradient(#fafafa,#e2e2e2);border-top:2px solid #c0c0c0;"></div><div style="left:0px;top:1724px;width:3px;height:258px;background:#c2c2c2;"></div><div style="left:3px;top:1724px;width:2555px;height:77px;background:linear-gradient(#cdcdcd 0px,#d9d9d9 16px,#dcdcdc 40px);"></div><div style="left:3px;top:1797px;width:2555px;height:4px;background:#c1c1c1;"></div><div style="left:95px;top:1740px;width:151px;height:57.5px;background:linear-gradient(#f0f39a,#dde06e);border:2px solid #c9cc84;border-bottom:none;border-radius:7px 7px 0 0;box-shadow:inset 0 2px 0 rgba(255,255,255,0.5);"></div><span class="t" style="left:109.2px;top:1756.03px;font-size:29.5px;line-height:29.5px;color:#2a2a2a;font-weight:normal;font-style:normal;font-family:'Liberation Sans', sans-serif;letter-spacing:0.13px;">Problems</span><div style="left:15.6px;top:1740px;width:75.4px;height:61px;background:linear-gradient(#fbfbfb,#f2f2f2);border:2px solid #b3b3b3;border-bottom:none;border-radius:7px 7px 0 0;"></div><span class="t" style="left:29.1px;top:1756.03px;font-size:29.5px;line-height:29.5px;color:#2a2a2a;font-weight:normal;font-style:normal;font-family:'Liberation Sans', sans-serif;letter-spacing:0.55px;">Log</span><div style="left:4px;top:1801px;width:2516px;height:181px;background:#ffffff;"></div><div style="left:4px;top:1866.5px;width:2516px;height:111.5px;background:#f9f9f9;"></div><div style="left:4px;top:1978px;width:2516px;height:4px;background:#ffffff;"></div><div style="left:4px;top:1801px;width:2516px;height:181px;overflow:hidden;"><div style="position:absolute;left:50px;top:-1.2px;width:40px;height:32px;"><svg style="position:absolute;left:0;top:0;width:40px;height:32px" viewBox="0 0 40 32"><defs><linearGradient id="ga" x1="0" y1="1" x2="1" y2="0"><stop offset="0" stop-color="#000"/><stop offset="1" stop-color="#007800"/></linearGradient></defs><path d="M3.5 14 L14 24.5 L35.5 3.5" fill="none" stroke="url(#ga)" stroke-width="7.6" stroke-linecap="round" stroke-linejoin="miter"/></svg></div></div><svg style="left:54px;top:1910.6px;width:40px;height:32px" viewBox="0 0 40 32"><defs><linearGradient id="gb" x1="0" y1="1" x2="1" y2="0"><stop offset="0" stop-color="#000"/><stop offset="1" stop-color="#007800"/></linearGradient></defs><path d="M3.5 14 L14 24.5 L35.5 3.5" fill="none" stroke="url(#gb)" stroke-width="7.6" stroke-linecap="round" stroke-linejoin="miter"/></svg><span class="t" style="left:125px;top:1825.47px;font-size:27.5px;line-height:27.5px;color:#2a2a2a;font-weight:normal;font-style:italic;font-family:'Liberation Sans', sans-serif;letter-spacing:0px;">16:32:43</span><span class="t" style="left:123px;top:1882.95px;font-size:29px;line-height:29px;color:#2a2a2a;font-weight:bold;font-style:normal;font-family:'Liberation Sans', sans-serif;letter-spacing:0px;">Audio file was imported successfully</span><span class="t" style="left:125px;top:1937.32px;font-size:27.5px;line-height:27.5px;color:#2a2a2a;font-weight:normal;font-style:italic;font-family:'Liberation Sans', sans-serif;letter-spacing:0px;">16:32:43</span><div style="left:2520px;top:1801px;width:36px;height:181px;background:linear-gradient(90deg,#e4e4e4,#f3f3f3 40%,#f3f3f3 60%,#e6e6e6);"></div><svg style="left:2527px;top:1808px;width:22px;height:14px" viewBox="0 0 22 14"><path d="M1.5 11.5 L11 3 L20.5 11.5" fill="none" stroke="#6a6a6a" stroke-width="2.4"/></svg><svg style="left:2527px;top:1964px;width:22px;height:14px" viewBox="0 0 22 14"><path d="M1.5 2.5 L11 11 L20.5 2.5" fill="none" stroke="#6a6a6a" stroke-width="2.4"/></svg><div style="left:2525px;top:1889.6px;width:25.6px;height:41px;border:2px solid #b0b0b0;border-radius:8px;background:linear-gradient(90deg,#f2f2f2,#e2e2e2);box-shadow:inset 0 0 0 2px rgba(255,255,255,0.8);"></div><div style="left:2556px;top:1724px;width:2px;height:258px;background:#c4c4c4;"></div><div style="left:2556px;top:609px;width:2px;height:1373px;background:#c6c6c6;"></div><svg style="left:2538px;top:0;width:20px;height:20px" viewBox="0 0 20 20"><path d="M4 0 H20 V16 A16 16 0 0 0 4 0 Z" fill="#c9c9c9"/><path d="M4 1.2 A15 15 0 0 1 19 16" fill="none" stroke="#a6a6a6" stroke-width="2.4"/></svg><svg style="left:0;top:0;width:20px;height:20px" viewBox="0 0 20 20"><path d="M16 0 H0 V16 A16 16 0 0 1 16 0 Z" fill="#6aa04a"/><path d="M16 1.2 A15 15 0 0 0 1 16" fill="none" stroke="#a6a6a6" stroke-width="2.4"/></svg>
</body></html>
